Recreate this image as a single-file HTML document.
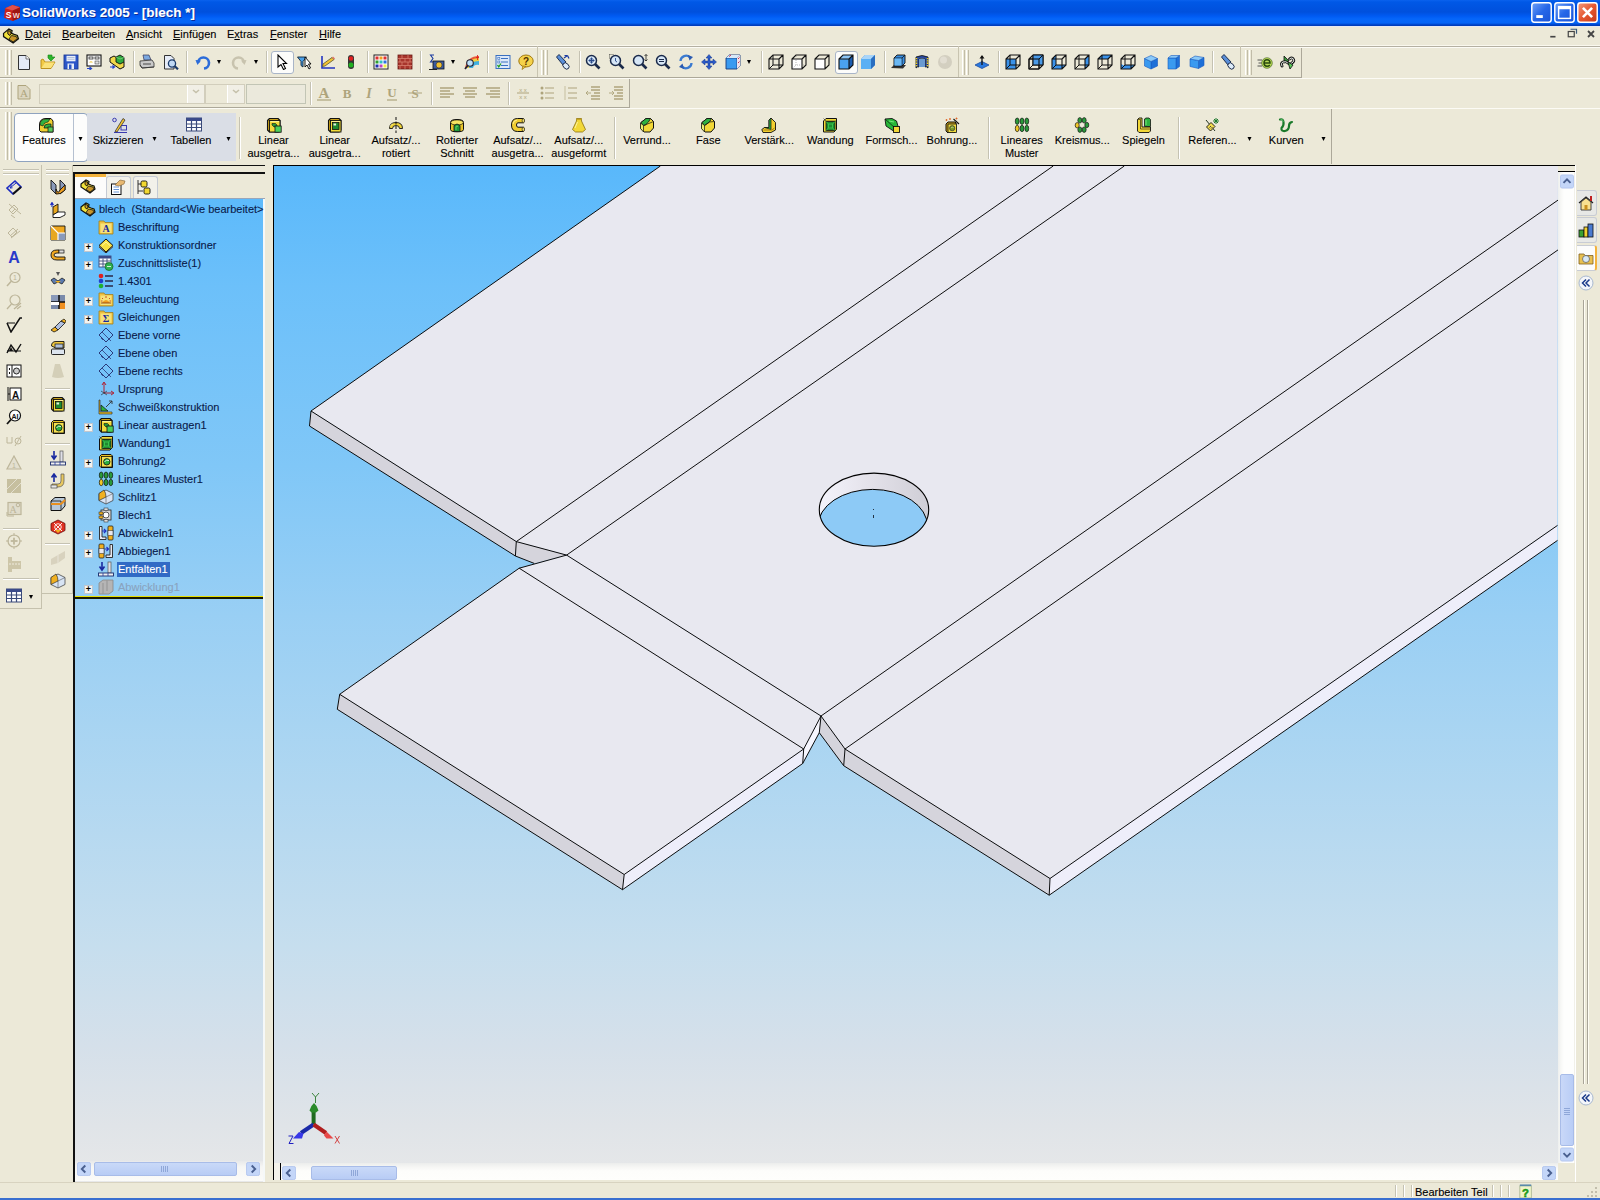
<!DOCTYPE html><html><head><meta charset="utf-8"><style>
*{margin:0;padding:0;box-sizing:border-box}
html,body{width:1600px;height:1200px;overflow:hidden;background:#ECE9D8;font-family:"Liberation Sans",sans-serif;font-size:11px;color:#000}
.a{position:absolute}
.tx{white-space:nowrap;line-height:13px;-webkit-text-stroke:0.1px currentColor}
.c{text-align:center}
#title{left:0;top:0;width:1600px;height:26px;background:linear-gradient(#0A62EE 0px,#0058E6 2px,#0053E0 8px,#0050DD 12px,#005AF2 16px,#0566FA 19px,#0564F6 23px,#0048D0 24.5px,#0038B0 26px)}
.mi{top:28px;font-size:11px;white-space:nowrap;line-height:13px;-webkit-text-stroke:0.1px currentColor}
.grip{width:3px;border-left:1px solid #fff;border-right:1px solid #C1BCA8}
.sep{width:2px;border-left:1px solid #C5C2B2;border-right:1px solid #fff}
.hsep{height:2px;border-top:1px solid #C5C2B2;border-bottom:1px solid #fff}
.tree{color:#0A1A4A}
</style></head><body>
<div id="title" class="a"></div>
<svg class="a" style="left:3px;top:4px" width="17" height="17" viewBox="0 0 16 16"><path d="M2 4 L9 1 L16 3 L16 13 L9 16 L1 13 Z" fill="#C8231E"/><path d="M9 1 L16 3 L16 13 L9 16 Z" fill="#9E1612"/><path d="M2 4L9 1L16 3L9 6Z" fill="#E0504A"/><text x="2.5" y="13" font-family="Liberation Sans" font-weight="bold" font-size="8" fill="#fff">S</text><text x="9.2" y="13" font-family="Liberation Sans" font-weight="bold" font-size="7" fill="#F4D0D0">W</text></svg>
<div class="a tx" style="left:22px;top:5px;color:#fff;font-weight:bold;font-size:13.5px;line-height:16px;text-shadow:1px 1px 0 #0B2C9A">SolidWorks 2005 - [blech *]</div>
<svg class="a" style="left:1531px;top:2px" width="21" height="21" viewBox="0 0 16 16"><defs><linearGradient id="xb" x1="0" y1="0" x2="1" y2="1"><stop offset="0" stop-color="#6FA1F8"/><stop offset="0.5" stop-color="#2767E8"/><stop offset="1" stop-color="#1A53D6"/></linearGradient></defs><rect x="0.6" y="0.6" width="14.8" height="14.8" rx="2" fill="url(#xb)" stroke="#fff" stroke-width="1.1"/><rect x="4" y="10" width="5" height="2.2" fill="#fff"/></svg>
<svg class="a" style="left:1554px;top:2px" width="21" height="21" viewBox="0 0 16 16"><defs><linearGradient id="xb" x1="0" y1="0" x2="1" y2="1"><stop offset="0" stop-color="#6FA1F8"/><stop offset="0.5" stop-color="#2767E8"/><stop offset="1" stop-color="#1A53D6"/></linearGradient></defs><rect x="0.6" y="0.6" width="14.8" height="14.8" rx="2" fill="url(#xb)" stroke="#fff" stroke-width="1.1"/><rect x="3.5" y="3.5" width="9" height="9" fill="none" stroke="#fff" stroke-width="1.1"/><rect x="3.5" y="3.5" width="9" height="2" fill="#fff"/></svg>
<svg class="a" style="left:1577px;top:2px" width="21" height="21" viewBox="0 0 16 16"><defs><linearGradient id="xr" x1="0" y1="0" x2="1" y2="1"><stop offset="0" stop-color="#F39B7E"/><stop offset="0.5" stop-color="#E5572F"/><stop offset="1" stop-color="#C4381A"/></linearGradient></defs><rect x="0.6" y="0.6" width="14.8" height="14.8" rx="2" fill="url(#xr)" stroke="#fff" stroke-width="1.1"/><path d="M4.5 4.5L11.5 11.5M11.5 4.5L4.5 11.5" stroke="#fff" stroke-width="2"/></svg>
<div class="a" style="left:0;top:26px;width:1600px;height:20px;background:#ECE9D8"></div>
<div class="a" style="left:0;top:26px;width:1600px;height:1px;background:#E6E8F2"></div>
<svg class="a" style="left:2px;top:27px" width="18" height="17" viewBox="0 0 16 16"><path d="M1 6 L6 2 L9 3.5 L8.5 6 L11 7 L14 8 L15 11 L10 15 L1 9 Z" fill="#F2E23A" stroke="#111" stroke-width="1.2"/><path d="M5 3.5 Q8 3 8 6 L7 8 L5 6.5Z" fill="#D4A020" stroke="#111" stroke-width="0.9"/><path d="M8.5 8 L13 9 L14 11 L10 14 L6 11.5Z" fill="#C9962A" stroke="#111" stroke-width="0.8"/></svg>
<div class="a mi" style="left:25px"><u>D</u>atei</div>
<div class="a mi" style="left:62px"><u>B</u>earbeiten</div>
<div class="a mi" style="left:126px"><u>A</u>nsicht</div>
<div class="a mi" style="left:173px"><u>E</u>infügen</div>
<div class="a mi" style="left:227px">E<u>x</u>tras</div>
<div class="a mi" style="left:270px"><u>F</u>enster</div>
<div class="a mi" style="left:319px"><u>H</u>ilfe</div>
<svg class="a" style="left:1548px;top:28px" width="12" height="12" viewBox="0 0 16 16"><rect x="3" y="10.5" width="7" height="2.2" fill="#444"/></svg>
<svg class="a" style="left:1566px;top:27px" width="12" height="12" viewBox="0 0 16 16"><path d="M6 3 H14 V9" fill="none" stroke="#3A5A7A" stroke-width="1.6"/><rect x="3" y="6" width="8" height="7" fill="none" stroke="#444" stroke-width="1.6"/></svg>
<svg class="a" style="left:1585px;top:28px" width="12" height="12" viewBox="0 0 16 16"><path d="M4 4L12 12M12 4L4 12" stroke="#444" stroke-width="2.4"/></svg>
<div class="a" style="left:0;top:45px;width:1600px;height:119px;background:#ECE9D8"></div><div class="a" style="left:0;top:45px;width:1600px;height:1px;background:#FAF8EE"></div><div class="a" style="left:0;top:46px;width:1600px;height:1px;background:#B4B0A2"></div><div class="a" style="left:0;top:47px;width:1600px;height:1px;background:#FCFBF5"></div>
<div class="a" style="left:0;top:48px;width:1302px;height:30px;border-bottom:1px solid #ACA899;border-right:1px solid #ACA899"></div><div class="a" style="left:0;top:78px;width:1600px;height:1px;background:#FCFBF5"></div>
<div class="a" style="left:0;top:79px;width:630px;height:29px;border-bottom:1px solid #ACA899;border-right:1px solid #ACA899"></div><div class="a" style="left:0;top:108px;width:1600px;height:1px;background:#FCFBF5"></div>
<div class="a" style="left:0;top:109px;width:1332px;height:55px;border-right:1px solid #ACA899"></div>
<div class="a grip" style="left:5px;top:50px;height:25px"></div>
<div class="a grip" style="left:9px;top:50px;height:25px"></div>
<div class="a grip" style="left:541px;top:50px;height:25px"></div>
<div class="a grip" style="left:545px;top:50px;height:25px"></div>
<div class="a grip" style="left:962px;top:50px;height:25px"></div>
<div class="a grip" style="left:966px;top:50px;height:25px"></div>
<div class="a grip" style="left:1245px;top:50px;height:25px"></div>
<div class="a grip" style="left:1249px;top:50px;height:25px"></div>
<div class="a grip" style="left:5px;top:82px;height:23px"></div>
<div class="a grip" style="left:9px;top:82px;height:23px"></div>
<div class="a grip" style="left:5px;top:112px;height:48px"></div>
<div class="a grip" style="left:9px;top:112px;height:48px"></div>
<div class="a sep" style="left:133px;top:51px;height:22px"></div>
<div class="a sep" style="left:186px;top:51px;height:22px"></div>
<div class="a sep" style="left:266px;top:51px;height:22px"></div>
<div class="a sep" style="left:367px;top:51px;height:22px"></div>
<div class="a sep" style="left:420px;top:51px;height:22px"></div>
<div class="a sep" style="left:487px;top:51px;height:22px"></div>
<div class="a sep" style="left:579px;top:51px;height:22px"></div>
<div class="a sep" style="left:761px;top:51px;height:22px"></div>
<div class="a sep" style="left:884px;top:51px;height:22px"></div>
<div class="a sep" style="left:998px;top:51px;height:22px"></div>
<div class="a sep" style="left:1212px;top:51px;height:22px"></div>
<div class="a" style="left:537px;top:46px;width:1px;height:31px;background:#C8C4B0"></div>
<div class="a" style="left:958px;top:46px;width:1px;height:31px;background:#C8C4B0"></div>
<div class="a" style="left:1240px;top:46px;width:1px;height:31px;background:#C8C4B0"></div>
<div class="a" style="left:271px;top:51px;width:23px;height:23px;background:#FCFCFA;border:1px solid #A9B5C8;border-radius:3px"></div>
<div class="a" style="left:835px;top:51px;width:23px;height:23px;background:#FCFCFA;border:1px solid #A9B5C8;border-radius:3px"></div>
<svg class="a" style="left:16px;top:54px" width="16" height="16" viewBox="0 0 16 16"><path d="M2.5 1.5 H10 L13.5 5 V15.5 H2.5 Z" fill="#E4EAF6" stroke="#333" stroke-width="1"/><path d="M10 1.5 V5 H13.5" fill="#fff" stroke="#555" stroke-width="0.8"/></svg>
<svg class="a" style="left:40px;top:54px" width="16" height="16" viewBox="0 0 16 16"><path d="M1 6 L1 14.5 L11 14.5 L15 8 L5 8 L3 5 Z" fill="#F3CB47" stroke="#B88A12" stroke-width="0.9"/><path d="M1.5 14 L5 8.5 L14.5 8.5 L11 14Z" fill="#FBE27A"/><path d="M8 1 L12 1 L12 3 L15 3 L11 7 L8 4 Z" fill="#2BB62B" stroke="#158015" stroke-width="0.6"/></svg>
<svg class="a" style="left:63px;top:54px" width="16" height="16" viewBox="0 0 16 16"><rect x="1" y="1" width="14" height="14" fill="#2B55C8" stroke="#1B3A96" stroke-width="0.9"/><rect x="3.5" y="1.8" width="9" height="5.5" fill="#E8EEF8"/><path d="M4.5 3.5H11.5M4.5 5.3H11.5" stroke="#9AAAD0" stroke-width="0.7"/><rect x="4.5" y="9.5" width="6.5" height="5.5" fill="#E8EEF8"/><rect x="6" y="10.5" width="2.5" height="4.5" fill="#2B55C8"/></svg>
<svg class="a" style="left:86px;top:54px" width="16" height="16" viewBox="0 0 16 16"><rect x="1" y="1" width="14" height="11" fill="#fff" stroke="#111" stroke-width="1.1"/><rect x="3" y="3" width="4" height="2" fill="none" stroke="#111" stroke-width="0.7"/><rect x="9" y="3" width="4" height="2" fill="none" stroke="#111" stroke-width="0.7"/><path d="M3 8.5 Q5 6 7 8.5Z" fill="#F0C840"/><rect x="9" y="7" width="4" height="3" fill="#ddd" stroke="#333" stroke-width="0.5"/><path d="M1 14.5 H5 M3.5 13 L5.5 14.5 L3.5 16" stroke="#2244CC" stroke-width="1.2" fill="none"/></svg>
<svg class="a" style="left:109px;top:54px" width="16" height="16" viewBox="0 0 16 16"><path d="M1 4 L5 2 L15 8 L15 13 L11 15 L1 8 Z" fill="#F0D84A" stroke="#111" stroke-width="1"/><path d="M7 3 L11 1 L15 3.5 L15 8 L11 10 L7 8Z" fill="#2EAA3C" stroke="#111" stroke-width="0.9"/><path d="M7 3L11 5L15 3.5" fill="none" stroke="#7FD080" stroke-width="0.8"/><path d="M1 13 H5 M3.5 11.5 L5.5 13 L3.5 14.5" stroke="#2244CC" stroke-width="1.2" fill="none"/></svg>
<svg class="a" style="left:139px;top:54px" width="16" height="16" viewBox="0 0 16 16"><path d="M4 1 L10 1 L12 6 L5 6Z" fill="#7BA8E0" stroke="#335" stroke-width="0.7"/><path d="M1 7 L13 6 L15 9 L15 13 L3 14 L1 11Z" fill="#C9C9C9" stroke="#444" stroke-width="0.9"/><path d="M1 11 L3 14 L15 13" fill="none" stroke="#333" stroke-width="0.8"/><rect x="4" y="9" width="8" height="2" fill="#888"/></svg>
<svg class="a" style="left:163px;top:54px" width="16" height="16" viewBox="0 0 16 16"><path d="M1.5 1.5 H8 L11 4.5 V15 H1.5 Z" fill="#E6ECF8" stroke="#333" stroke-width="1"/><circle cx="9" cy="9.5" r="3.6" fill="#BFD8F4" stroke="#1A3A6A" stroke-width="1.3"/><path d="M11.5 12 L15 15.3" stroke="#1A3A6A" stroke-width="2.2"/></svg>
<svg class="a" style="left:195px;top:54px" width="16" height="16" viewBox="0 0 16 16"><path d="M3 9 A5.5 5.5 0 1 1 9 14.5" fill="none" stroke="#2C6CD9" stroke-width="2.6"/><path d="M0.5 6 L6 6.5 L2.5 11Z" fill="#2C6CD9"/></svg>
<svg class="a" style="left:231px;top:54px" width="16" height="16" viewBox="0 0 16 16"><path d="M13 9 A5.5 5.5 0 1 0 7 14.5" fill="none" stroke="#C8C3AE" stroke-width="2.6"/><path d="M15.5 6 L10 6.5 L13.5 11Z" fill="#C8C3AE"/></svg>
<svg class="a" style="left:274px;top:54px" width="16" height="16" viewBox="0 0 16 16"><path d="M4 1 L4 13 L7 10.5 L9.5 15.5 L11.5 14.5 L9 9.5 L12.5 9.5 Z" fill="#fff" stroke="#000" stroke-width="1.1"/></svg>
<svg class="a" style="left:297px;top:54px" width="16" height="16" viewBox="0 0 16 16"><path d="M0.5 3 H9.5 L6 7.5 V13 L4 11.5 V7.5Z" fill="#4AA0E8" stroke="#123" stroke-width="0.9"/><path d="M8 3 L8 13 L10 11 L12 15 L13.5 14 L11.5 10 L14 10Z" fill="#fff" stroke="#000" stroke-width="0.9"/></svg>
<svg class="a" style="left:320px;top:54px" width="16" height="16" viewBox="0 0 16 16"><path d="M2 2 V14 H15" fill="none" stroke="#2235C0" stroke-width="1.6"/><path d="M3 10 L12 3.5 L14 5.5 L5 12 L2.5 12.5Z" fill="#F2C230" stroke="#553" stroke-width="0.8"/><path d="M12 3.5L14 5.5L15 4.5L13 2.5Z" fill="#E07060"/></svg>
<svg class="a" style="left:343px;top:54px" width="16" height="16" viewBox="0 0 16 16"><rect x="5" y="1" width="6" height="14" rx="3" fill="#333"/><circle cx="8" cy="4.5" r="2.3" fill="#E02020"/><circle cx="8" cy="11" r="2.5" fill="#20B020"/></svg>
<svg class="a" style="left:373px;top:54px" width="16" height="16" viewBox="0 0 16 16"><rect x="1" y="1" width="14" height="14" fill="#fff" stroke="#222" stroke-width="1"/><rect x="2.5" y="2.5" width="3" height="3" fill="#E03030"/><rect x="6.5" y="2.5" width="3" height="3" fill="#F0A020"/><rect x="10.5" y="2.5" width="3" height="3" fill="#E03030"/><rect x="2.5" y="6.5" width="3" height="3" fill="#30A030"/><rect x="6.5" y="6.5" width="3" height="3" fill="#30C0C0"/><rect x="10.5" y="6.5" width="3" height="3" fill="#3070E0"/><rect x="2.5" y="10.5" width="3" height="3" fill="#2030B0"/><rect x="6.5" y="10.5" width="3" height="3" fill="#C040C0"/><rect x="10.5" y="10.5" width="3" height="3" fill="#F0F040"/></svg>
<svg class="a" style="left:397px;top:54px" width="16" height="16" viewBox="0 0 16 16"><rect x="1" y="1" width="14" height="14" fill="#A8342C" stroke="#6A1A14" stroke-width="0.8"/><path d="M1 4.5H15M1 8H15M1 11.5H15M5 1V4.5M11 1V4.5M3 4.5V8M8 4.5V8M13 4.5V8M5 8V11.5M11 8V11.5M3 11.5V15M8 11.5V15M13 11.5V15" stroke="#D88070" stroke-width="0.8"/></svg>
<svg class="a" style="left:429px;top:54px" width="16" height="16" viewBox="0 0 16 16"><path d="M5 1 H1.5 L4 4.5 L1.5 8 H5" fill="none" stroke="#1A3AA0" stroke-width="1.1"/><rect x="4" y="7" width="11" height="8" fill="#3A5AA0" stroke="#111" stroke-width="0.8"/><circle cx="10" cy="11" r="3" fill="#F0C030" stroke="#333" stroke-width="0.6"/><path d="M0 15.5H8" stroke="#222" stroke-width="1"/></svg>
<svg class="a" style="left:464px;top:54px" width="16" height="16" viewBox="0 0 16 16"><path d="M1 14 Q3 2 15 2 V6 Q6 6 5 14Z" fill="#E85C3A"/><path d="M3 14 Q4 4 15 4 V9 Q8 8 7 14Z" fill="#F0D040"/><path d="M5 14 Q6 7 15 7 V11 Q10 10 9 14Z" fill="#40B0E0"/><circle cx="6" cy="9" r="3.3" fill="#BDE0F8" stroke="#223" stroke-width="1.1"/><path d="M3.8 11.5L1 15" stroke="#223" stroke-width="1.8"/><path d="M13.5 1V6M12 3.5H15" stroke="#E02020" stroke-width="0.9"/></svg>
<svg class="a" style="left:495px;top:54px" width="16" height="16" viewBox="0 0 16 16"><rect x="1" y="1.5" width="14" height="13" fill="#DCE8F8" stroke="#3A70C0" stroke-width="1"/><path d="M6 4.5H13M6 8H13M6 11.5H13" stroke="#3A70C0" stroke-width="1"/><rect x="2.8" y="3.5" width="2" height="2" fill="none" stroke="#3A70C0" stroke-width="0.6"/><rect x="2.8" y="7" width="2" height="2" fill="none" stroke="#3A70C0" stroke-width="0.6"/><path d="M2.5 11 L3.8 12.8 L6 9.5" stroke="#20A020" stroke-width="1.3" fill="none"/></svg>
<svg class="a" style="left:518px;top:54px" width="16" height="16" viewBox="0 0 16 16"><ellipse cx="8" cy="7" rx="7.2" ry="6" fill="#F5D24A" stroke="#A07810" stroke-width="1"/><path d="M5 12 L4 15.5 L8 12.5Z" fill="#F5D24A" stroke="#A07810" stroke-width="0.8"/><text x="8" y="11" text-anchor="middle" font-family="Liberation Sans" font-weight="bold" font-size="10" fill="#503000">?</text></svg>
<svg class="a" style="left:555px;top:54px" width="16" height="16" viewBox="0 0 16 16"><path d="M1.5 3 L4 0.5 L11 8 L8 11Z" fill="#5A8ED8" stroke="#102040" stroke-width="0.9"/><ellipse cx="11" cy="12" rx="3.5" ry="2.6" transform="rotate(45 11 12)" fill="#DCEBFA" stroke="#102040" stroke-width="0.9"/><path d="M9 4 L12.5 1.5 M12.5 1.5 L14 4.5 M9.5 1.5 H12.5" stroke="#1A3AA0" stroke-width="1.2" fill="none"/></svg>
<svg class="a" style="left:585px;top:54px" width="16" height="16" viewBox="0 0 16 16"><circle cx="6.5" cy="6.5" r="5" fill="#D6E6F6" stroke="#1A2A4A" stroke-width="1.5"/><path d="M6.5 3.5V9.5M3.5 6.5H9.5" stroke="#2A4A8A" stroke-width="1"/><circle cx="6.5" cy="6.5" r="2" fill="none" stroke="#2A4A8A" stroke-width="0.8"/><path d="M10 10 L14.5 14.5" stroke="#1A2A4A" stroke-width="2.6"/></svg>
<svg class="a" style="left:609px;top:54px" width="16" height="16" viewBox="0 0 16 16"><circle cx="6.5" cy="6.5" r="5" fill="#D6E6F6" stroke="#1A2A4A" stroke-width="1.5"/><path d="M6.5 4V7L8 8" stroke="#2A4A8A" stroke-width="0.9" fill="none"/><path d="M10 10 L14.5 14.5" stroke="#1A2A4A" stroke-width="2.6"/><path d="M0.5 0.5H5M0.5 0.5V5" stroke="#333" stroke-dasharray="1 1" stroke-width="0.8"/></svg>
<svg class="a" style="left:632px;top:54px" width="16" height="16" viewBox="0 0 16 16"><circle cx="6.5" cy="6.5" r="5" fill="#D6E6F6" stroke="#1A2A4A" stroke-width="1.5"/><path d="M10 10 L14.5 14.5" stroke="#1A2A4A" stroke-width="2.6"/><path d="M14 0.5V7M12.5 2L14 0.5L15.5 2M12.5 5.5L14 7L15.5 5.5" stroke="#222" stroke-width="0.8" fill="none"/></svg>
<svg class="a" style="left:655px;top:54px" width="16" height="16" viewBox="0 0 16 16"><circle cx="6.5" cy="6.5" r="5" fill="#D6E6F6" stroke="#1A2A4A" stroke-width="1.5"/><path d="M4 5.5H9M4 7.5H9" stroke="#1A2A4A" stroke-width="1.1"/><path d="M10 10 L14.5 14.5" stroke="#1A2A4A" stroke-width="2.6"/></svg>
<svg class="a" style="left:678px;top:54px" width="16" height="16" viewBox="0 0 16 16"><path d="M2.5 7 A5.5 5.5 0 0 1 12 3.5" fill="none" stroke="#3A7AD0" stroke-width="2.3"/><path d="M13.5 9 A5.5 5.5 0 0 1 4 12.5" fill="none" stroke="#3A7AD0" stroke-width="2.3"/><path d="M10 1 L15 3 L11.5 6.5Z" fill="#2A5AB0"/><path d="M6 15 L1 13 L4.5 9.5Z" fill="#2A5AB0"/></svg>
<svg class="a" style="left:701px;top:54px" width="16" height="16" viewBox="0 0 16 16"><path d="M8 0.5 L11 4 H9 V7 H12 V5 L15.5 8 L12 11 V9 H9 V12 H11 L8 15.5 L5 12 H7 V9 H4 V11 L0.5 8 L4 5 V7 H7 V4 H5Z" fill="#2A5AC8" stroke="#1A3A8A" stroke-width="0.5"/></svg>
<svg class="a" style="left:725px;top:54px" width="16" height="16" viewBox="0 0 16 16"><path d="M1 4 L4 1 L15 1 L15 12 L12 15 L1 15Z" fill="#3A9AF0" stroke="#1A3A7A" stroke-width="0.9"/><path d="M1 4H12V15M12 4L15 1" stroke="#1A3A7A" stroke-width="0.8" fill="none"/><path d="M1 4L4 1H15L12 4Z" fill="#D8E8F8"/><path d="M12 4L15 1V12L12 15Z" fill="#F0E0E8"/><path d="M4 2.5L6 1M13 5L14.5 3.5M13 9L14.5 7.5" stroke="#C02040" stroke-width="0.9"/></svg>
<svg class="a" style="left:768px;top:54px" width="16" height="16" viewBox="0 0 16 16"><path d="M1 5 L5 1 H15 V11 L11 15 H1Z" fill="#ECE9D8" fill-opacity="0"/><path d="M1 5 L5 1 H15 V11 L11 15 H1Z M1 5H11V15 M11 5L15 1" fill="none" stroke="#111" stroke-width="1.1"/><path d="M5 1V11H15M5 11L1 15" fill="none" stroke="#111" stroke-width="1"/></svg>
<svg class="a" style="left:791px;top:54px" width="16" height="16" viewBox="0 0 16 16"><path d="M1 5 L5 1 H15 V11 L11 15 H1Z" fill="#ECE9D8" fill-opacity="0"/><rect x="1" y="5" width="10" height="10" fill="#fff"/><path d="M1 5 L5 1 H15 V11 L11 15 H1Z M1 5H11V15 M11 5L15 1" fill="none" stroke="#111" stroke-width="1.1"/><path d="M5 2V11H14M5 11L2 14" fill="none" stroke="#888" stroke-width="0.6" stroke-dasharray="1 1"/></svg>
<svg class="a" style="left:814px;top:54px" width="16" height="16" viewBox="0 0 16 16"><path d="M1 5 L5 1 H15 V11 L11 15 H1Z" fill="#ECE9D8" fill-opacity="0"/><rect x="1" y="5" width="10" height="10" fill="#fff"/><path d="M1 5 L5 1 H15 V11 L11 15 H1Z M1 5H11V15 M11 5L15 1" fill="none" stroke="#111" stroke-width="1.1"/></svg>
<svg class="a" style="left:838px;top:54px" width="16" height="16" viewBox="0 0 16 16"><path d="M1 5 L5 1 H15 V11 L11 15 H1Z" fill="#2E86E0"/><path d="M1 5L5 1H15L11 5Z" fill="#8CC4F4"/><path d="M11 5L15 1V11L11 15Z" fill="#1A5CB0"/><rect x="1" y="5" width="10" height="10" fill="#4AA2F0"/><path d="M1 5 L5 1 H15 V11 L11 15 H1Z M1 5H11V15 M11 5L15 1" fill="none" stroke="#111" stroke-width="1.1"/></svg>
<svg class="a" style="left:860px;top:54px" width="16" height="16" viewBox="0 0 16 16"><path d="M1 5 L5 1 H15 V11 L11 15 H1Z" fill="#3A8EE0"/><path d="M1 5L5 1H15L11 5Z" fill="#A8D4F8"/><path d="M11 5L15 1V11L11 15Z" fill="#2A6EC0"/><rect x="1" y="5" width="10" height="10" fill="#5AB0F4"/></svg>
<svg class="a" style="left:891px;top:54px" width="16" height="16" viewBox="0 0 16 16"><path d="M0 14 L3 11 H15 L12 14.5Z" fill="#333"/><path d="M3 4 L6 1 H14 V9 L11 12 H3Z" fill="#3A8EE0" stroke="#111" stroke-width="0.9"/><path d="M3 4H11V12M11 4L14 1" stroke="#111" stroke-width="0.8" fill="none"/><rect x="3.5" y="4.5" width="7" height="7" fill="#6AB8F4"/></svg>
<svg class="a" style="left:914px;top:54px" width="16" height="16" viewBox="0 0 16 16"><path d="M2 3 Q8 0 14 3 V14 Q12 12 11 13 V5 Q8 4 5 5 V13 Q4 12 2 14Z" fill="#2A4AA0" stroke="#111" stroke-width="0.8"/><path d="M2.5 4V13M13.5 4V13" stroke="#F0D020" stroke-width="1.6" stroke-dasharray="1.3 1"/><path d="M5 5 Q8 4 11 5 V13 H5Z" fill="#6A9AD0"/></svg>
<svg class="a" style="left:937px;top:54px" width="16" height="16" viewBox="0 0 16 16"><circle cx="8" cy="8" r="7" fill="#D3CFC0"/><circle cx="6.5" cy="6" r="3.5" fill="#E2DED2"/></svg>
<svg class="a" style="left:974px;top:54px" width="16" height="16" viewBox="0 0 16 16"><path d="M1 11 L8 7.5 L15 11 L8 14.5Z" fill="#2A7AE0" stroke="#1A4AA0" stroke-width="0.8"/><path d="M8 11V2" stroke="#111" stroke-width="1.3"/><path d="M5.5 4.5L8 1L10.5 4.5Z" fill="#111"/></svg>
<svg class="a" style="left:1005px;top:54px" width="16" height="16" viewBox="0 0 16 16"><path d="M1 5 L5 1 H15 V11 L11 15 H1Z" fill="#ECE9D8" fill-opacity="0"/><rect x="1" y="5" width="10" height="10" fill="#3A92EA"/><path d="M1 5 L5 1 H15 V11 L11 15 H1Z M1 5H11V15 M11 5L15 1" fill="none" stroke="#111" stroke-width="1.1"/><path d="M5 1V11H15M5 11L1 15" fill="none" stroke="#111" stroke-width="1"/></svg>
<svg class="a" style="left:1028px;top:54px" width="16" height="16" viewBox="0 0 16 16"><path d="M1 5 L5 1 H15 V11 L11 15 H1Z" fill="#ECE9D8" fill-opacity="0"/><path d="M1 5 L5 1 H15 V11 L11 15 H1Z M1 5H11V15 M11 5L15 1" fill="none" stroke="#111" stroke-width="1.1"/><path d="M5 1V11H15M5 11L1 15" fill="none" stroke="#111" stroke-width="1"/><path d="M5 1 H15 V11 H5Z" fill="#3A92EA" fill-opacity="0.9"/><path d="M1 5 L5 1 H15 V11 L11 15 H1Z M1 5H11V15 M11 5L15 1M5 1V11H15M5 11L1 15" fill="none" stroke="#111" stroke-width="1"/></svg>
<svg class="a" style="left:1051px;top:54px" width="16" height="16" viewBox="0 0 16 16"><path d="M1 5L5 1V11L1 15Z" fill="#3A92EA"/><path d="M1 15L5 11H15L11 15Z" fill="#3A92EA"/><path d="M1 5 L5 1 H15 V11 L11 15 H1Z" fill="#ECE9D8" fill-opacity="0"/><path d="M1 5 L5 1 H15 V11 L11 15 H1Z M1 5H11V15 M11 5L15 1" fill="none" stroke="#111" stroke-width="1.1"/><path d="M5 1V11H15M5 11L1 15" fill="none" stroke="#111" stroke-width="1"/></svg>
<svg class="a" style="left:1074px;top:54px" width="16" height="16" viewBox="0 0 16 16"><path d="M11 5L15 1V11L11 15Z" fill="#3A92EA"/><path d="M1 5 L5 1 H15 V11 L11 15 H1Z" fill="#ECE9D8" fill-opacity="0"/><path d="M1 5 L5 1 H15 V11 L11 15 H1Z M1 5H11V15 M11 5L15 1" fill="none" stroke="#111" stroke-width="1.1"/><path d="M5 1V11H15M5 11L1 15" fill="none" stroke="#111" stroke-width="1"/></svg>
<svg class="a" style="left:1097px;top:54px" width="16" height="16" viewBox="0 0 16 16"><path d="M1 5L5 1H15L11 5Z" fill="#3A92EA"/><path d="M1 5 L5 1 H15 V11 L11 15 H1Z" fill="#ECE9D8" fill-opacity="0"/><path d="M1 5 L5 1 H15 V11 L11 15 H1Z M1 5H11V15 M11 5L15 1" fill="none" stroke="#111" stroke-width="1.1"/><path d="M5 1V11H15M5 11L1 15" fill="none" stroke="#111" stroke-width="1"/></svg>
<svg class="a" style="left:1120px;top:54px" width="16" height="16" viewBox="0 0 16 16"><path d="M1 15L5 11H15L11 15Z" fill="#3A92EA"/><path d="M1 10V15H11" fill="#3A92EA"/><path d="M1 5 L5 1 H15 V11 L11 15 H1Z" fill="#ECE9D8" fill-opacity="0"/><path d="M1 5 L5 1 H15 V11 L11 15 H1Z M1 5H11V15 M11 5L15 1" fill="none" stroke="#111" stroke-width="1.1"/><path d="M5 1V11H15M5 11L1 15" fill="none" stroke="#111" stroke-width="1"/></svg>
<svg class="a" style="left:1143px;top:54px" width="16" height="16" viewBox="0 0 16 16"><path d="M8 7.5 L14.5 4.5 V12 L8 15Z" fill="#1E70D8" stroke="#1A5AC0" stroke-width="0.6"/><path d="M1.5 4.5 L8 7.5 V15 L1.5 12Z" fill="#3A9AF0" stroke="#1A5AC0" stroke-width="0.6"/><path d="M1.5 4.5 L8 1.5 L14.5 4.5 L8 7.5Z" fill="#8CCAF8" stroke="#1A5AC0" stroke-width="0.6"/></svg>
<svg class="a" style="left:1166px;top:54px" width="16" height="16" viewBox="0 0 16 16"><path d="M10 4 L13.5 1.5 V12.5 L10 15Z" fill="#1E70D8" stroke="#1A5AC0" stroke-width="0.6"/><path d="M2 4 H10 V15 H2Z" fill="#3A9AF0" stroke="#1A5AC0" stroke-width="0.6"/><path d="M2 4 L5 1.5 H13.5 L10 4Z" fill="#8CCAF8" stroke="#1A5AC0" stroke-width="0.6"/></svg>
<svg class="a" style="left:1189px;top:54px" width="16" height="16" viewBox="0 0 16 16"><path d="M9.5 6.5 L15 3.5 V11.5 L9.5 14.5Z" fill="#1E70D8" stroke="#1A5AC0" stroke-width="0.6"/><path d="M1 5 L9.5 6.5 V14.5 L1 12.5Z" fill="#3A9AF0" stroke="#1A5AC0" stroke-width="0.6"/><path d="M1 5 L6 2 L15 3.5 L9.5 6.5Z" fill="#8CCAF8" stroke="#1A5AC0" stroke-width="0.6"/></svg>
<svg class="a" style="left:1220px;top:54px" width="16" height="16" viewBox="0 0 16 16"><path d="M1.5 3 L4 0.5 L11 8 L8 11Z" fill="#5A8ED8" stroke="#102040" stroke-width="0.9"/><ellipse cx="11" cy="12" rx="3.5" ry="2.6" transform="rotate(45 11 12)" fill="#DCEBFA" stroke="#102040" stroke-width="0.9"/></svg>
<svg class="a" style="left:1257px;top:54px" width="16" height="16" viewBox="0 0 16 16"><path d="M0.5 6H5M1.5 9H5M0.5 12H5" stroke="#444" stroke-width="0.9"/><circle cx="10" cy="9" r="5.3" fill="#B8DA58" stroke="#3A5A18" stroke-width="0.6"/><path d="M7 9H13 Q13 5.8 10 5.8 Q7 5.8 7 9 Q7 12.2 10 12.2 Q12 12.2 12.8 11" fill="none" stroke="#2A4A10" stroke-width="1.5"/></svg>
<svg class="a" style="left:1280px;top:54px" width="16" height="16" viewBox="0 0 16 16"><path d="M4 2 L9 7 L4 9Z" fill="#3A9A3A" stroke="#111" stroke-width="0.8"/><path d="M2 12 Q0.5 9 3 8 Q6 7 8 9 Q10 11 12 9 Q15 7 13 4.5 Q11 3 9.5 5" fill="none" stroke="#111" stroke-width="2.8" stroke-linecap="round"/><path d="M2 12 Q0.5 9 3 8 Q6 7 8 9 Q10 11 12 9 Q15 7 13 4.5 Q11 3 9.5 5" fill="none" stroke="#EEF4EE" stroke-width="1" stroke-linecap="round"/><path d="M8 8 L13 11 L10 15Z" fill="#5ACA5A" stroke="#111" stroke-width="0.8"/></svg>
<svg class="a" style="left:216px;top:60px" width="6" height="4" viewBox="0 0 16 16"><path d="M0 0 H16 L8 16Z" fill="#000"/></svg>
<svg class="a" style="left:253px;top:60px" width="6" height="4" viewBox="0 0 16 16"><path d="M0 0 H16 L8 16Z" fill="#000"/></svg>
<svg class="a" style="left:450px;top:60px" width="6" height="4" viewBox="0 0 16 16"><path d="M0 0 H16 L8 16Z" fill="#000"/></svg>
<svg class="a" style="left:746px;top:60px" width="6" height="4" viewBox="0 0 16 16"><path d="M0 0 H16 L8 16Z" fill="#000"/></svg>
<svg class="a" style="left:16px;top:84px" width="16" height="16" viewBox="0 0 16 16"><path d="M2 1.5H10L14 5.5V15H2Z" fill="#DCD6C0" stroke="#AEA47C" stroke-width="1"/><text x="8" y="13" text-anchor="middle" font-family="Liberation Serif" font-size="11" fill="#AEA47C">A</text></svg>
<div class="a" style="left:39px;top:84px;width:166px;height:20px;border:1px solid #D2CEBC;background:#ECE9D8"></div>
<div class="a" style="left:187px;top:85px;width:17px;height:18px;background:#F1EFE6;border-left:1px solid #fff"></div>
<div class="a" style="left:205px;top:84px;width:40px;height:20px;border:1px solid #D2CEBC;background:#ECE9D8"></div>
<div class="a" style="left:227px;top:85px;width:17px;height:18px;background:#F1EFE6;border-left:1px solid #fff"></div>
<svg class="a" style="left:191px;top:89px" width="10" height="8" viewBox="0 0 16 16"><path d="M2 2 L8 7 L14 2" fill="none" stroke="#C5C0AA" stroke-width="3"/></svg>
<svg class="a" style="left:231px;top:89px" width="10" height="8" viewBox="0 0 16 16"><path d="M2 2 L8 7 L14 2" fill="none" stroke="#C5C0AA" stroke-width="3"/></svg>
<div class="a" style="left:246px;top:84px;width:60px;height:20px;border:1px solid #C2C5B5;background:#EBE9DC"></div>
<div class="a sep" style="left:310px;top:82px;height:23px"></div>
<div class="a sep" style="left:431px;top:82px;height:23px"></div>
<div class="a sep" style="left:508px;top:82px;height:23px"></div>
<svg class="a" style="left:316px;top:85px" width="16" height="16" viewBox="0 0 16 16"><text x="8" y="13" text-anchor="middle" font-family="Liberation Serif" font-weight="bold" font-size="15" fill="#AEA47C">A</text><path d="M1 15H15" stroke="#AEA47C" stroke-width="1.2"/></svg>
<svg class="a" style="left:339px;top:85px" width="16" height="16" viewBox="0 0 16 16"><text x="8" y="13" text-anchor="middle" font-family="Liberation Serif" font-weight="bold" font-size="13" fill="#AEA47C">B</text></svg>
<svg class="a" style="left:361px;top:85px" width="16" height="16" viewBox="0 0 16 16"><text x="8" y="13" text-anchor="middle" font-family="Liberation Serif" font-style="italic" font-weight="bold" font-size="14" fill="#AEA47C">I</text></svg>
<svg class="a" style="left:384px;top:85px" width="16" height="16" viewBox="0 0 16 16"><text x="8" y="12" text-anchor="middle" font-family="Liberation Serif" font-weight="bold" font-size="13" fill="#AEA47C">U</text><path d="M3 15H13" stroke="#AEA47C" stroke-width="1.2"/></svg>
<svg class="a" style="left:407px;top:85px" width="16" height="16" viewBox="0 0 16 16"><text x="8" y="13" text-anchor="middle" font-family="Liberation Serif" font-weight="bold" font-size="13" fill="#AEA47C">S</text><path d="M1 8H15" stroke="#AEA47C" stroke-width="1"/></svg>
<svg class="a" style="left:439px;top:85px" width="16" height="16" viewBox="0 0 16 16"><path d="M1 3H15M1 6H11M1 9H15M1 12H11" stroke="#AEA47C" stroke-width="1.3"/></svg>
<svg class="a" style="left:462px;top:85px" width="16" height="16" viewBox="0 0 16 16"><path d="M1 3H15M3 6H13M1 9H15M3 12H13" stroke="#AEA47C" stroke-width="1.3"/></svg>
<svg class="a" style="left:485px;top:85px" width="16" height="16" viewBox="0 0 16 16"><path d="M1 3H15M5 6H15M1 9H15M5 12H15" stroke="#AEA47C" stroke-width="1.3"/></svg>
<svg class="a" style="left:515px;top:85px" width="16" height="16" viewBox="0 0 16 16"><path d="M2 8H14" stroke="#AEA47C" stroke-width="1"/><text x="8" y="6.5" text-anchor="middle" font-family="Liberation Sans" font-size="6" fill="#AEA47C">x x</text><text x="8" y="14" text-anchor="middle" font-family="Liberation Sans" font-size="6" fill="#AEA47C">x x</text></svg>
<svg class="a" style="left:539px;top:85px" width="16" height="16" viewBox="0 0 16 16"><circle cx="3" cy="3" r="1.5" fill="#AEA47C"/><circle cx="3" cy="8" r="1.5" fill="#AEA47C"/><circle cx="3" cy="13" r="1.5" fill="#AEA47C"/><path d="M6 3H15M6 8H15M6 13H15" stroke="#AEA47C" stroke-width="1.2"/></svg>
<svg class="a" style="left:562px;top:85px" width="16" height="16" viewBox="0 0 16 16"><path d="M3 1V15" stroke="#AEA47C" stroke-width="0.6"/><path d="M6 3H15M6 8H15M6 13H15" stroke="#AEA47C" stroke-width="1.2"/></svg>
<svg class="a" style="left:585px;top:85px" width="16" height="16" viewBox="0 0 16 16"><path d="M6 2H15M6 5H15M9 8H15M6 11H15M6 14H15" stroke="#AEA47C" stroke-width="1.4"/><path d="M1 8H6M3 6L1 8L3 10" stroke="#AEA47C" stroke-width="0.9" fill="none"/></svg>
<svg class="a" style="left:608px;top:85px" width="16" height="16" viewBox="0 0 16 16"><path d="M6 2H15M6 5H15M9 8H15M6 11H15M6 14H15" stroke="#AEA47C" stroke-width="1.4"/><path d="M1 8H6M4 6L6 8L4 10" stroke="#AEA47C" stroke-width="0.9" fill="none"/></svg>
<div class="a" style="left:14px;top:113px;width:74px;height:49px;background:#FDFDFC;border:1px solid #8FA3BF;border-radius:4px"></div>
<div class="a" style="left:73px;top:114px;width:1px;height:47px;background:#B5C0D0"></div>
<div class="a" style="left:87px;top:113px;width:149px;height:48px;background:#DADEE6"></div>
<svg class="a" style="left:38px;top:117px" width="16" height="16" viewBox="0 0 16 16"><path d="M1.5 8 Q1.5 1.5 8 1.5 H13 L15 4 V15 H3 L1.5 13.5Z" fill="#F0D030" stroke="#111" stroke-width="1"/><path d="M2 8 Q2 2 8 2 H12 L10 5 Q6 5 5 9 Z" fill="#2EB040" stroke="#111" stroke-width="0.6"/><path d="M6 11 Q6 7 10 7 L13 7 L13 11Z" fill="#2EB040" stroke="#111" stroke-width="0.7"/><rect x="10" y="10" width="5" height="5" fill="#5ACA5A" stroke="#111" stroke-width="0.7"/></svg>
<div class="a tx c" style="left:-16px;top:134px;width:120px;">Features</div>
<svg class="a" style="left:77px;top:137px" width="7" height="4" viewBox="0 0 16 16"><path d="M0 0 H16 L8 16Z" fill="#000"/></svg>
<svg class="a" style="left:112px;top:117px" width="16" height="16" viewBox="0 0 16 16"><circle cx="2.5" cy="3" r="1.8" fill="none" stroke="#3A3AB0" stroke-width="1"/><rect x="9" y="8.5" width="5.5" height="4.5" fill="none" stroke="#3A3AB0" stroke-width="1"/><path d="M2 15.5H15" stroke="#3A3AB0" stroke-width="1"/><path d="M3 14.5 L11 1.5 L13 3 L5 15Z" fill="#F2C230" stroke="#333" stroke-width="0.8"/></svg>
<div class="a tx c" style="left:58px;top:134px;width:120px;">Skizzieren</div>
<svg class="a" style="left:151px;top:137px" width="7" height="4" viewBox="0 0 16 16"><path d="M0 0 H16 L8 16Z" fill="#000"/></svg>
<svg class="a" style="left:186px;top:117px" width="16" height="16" viewBox="0 0 16 16"><rect x="0.5" y="1" width="15" height="13" fill="#fff" stroke="#3A4A7A" stroke-width="1"/><rect x="0.5" y="1" width="15" height="3" fill="#3A4A8A"/><path d="M0.5 7H15.5M0.5 10.5H15.5M5.5 4V14M10.5 4V14" stroke="#3A4A7A" stroke-width="1.2"/></svg>
<div class="a tx c" style="left:131px;top:134px;width:120px;">Tabellen</div>
<svg class="a" style="left:225px;top:137px" width="7" height="4" viewBox="0 0 16 16"><path d="M0 0 H16 L8 16Z" fill="#000"/></svg>
<div class="a sep" style="left:239px;top:117px;height:42px"></div>
<div class="a sep" style="left:614px;top:117px;height:42px"></div>
<div class="a sep" style="left:988px;top:117px;height:42px"></div>
<div class="a sep" style="left:1178px;top:117px;height:42px"></div>
<svg class="a" style="left:266px;top:117px" width="16" height="16" viewBox="0 0 16 16"><path d="M1.5 3.5 L3.5 1.5 H12 L14 3.5 V13 L12 15 H3.5 L1.5 13Z" fill="#C8A018" stroke="#111" stroke-width="1.1" stroke-linejoin="round"/><rect x="3.5" y="3.5" width="10.5" height="11.5" fill="#F2DC3A" stroke="#111" stroke-width="0.9"/><path d="M4.5 4.5 H13" stroke="#FFF7A8" stroke-width="0.8"/><path d="M6 6.5 L9.5 6.5 L11 8 V10 H8 L6 8Z" fill="#2A9A38" stroke="#111" stroke-width="0.6"/><rect x="9" y="9" width="6.2" height="6.2" fill="#4CD05A" stroke="#111" stroke-width="0.8"/></svg>
<div class="a tx c" style="left:213.5px;top:134px;width:120px;">Linear</div>
<div class="a tx c" style="left:213.5px;top:147px;width:120px;">ausgetra...</div>
<svg class="a" style="left:327px;top:117px" width="16" height="16" viewBox="0 0 16 16"><path d="M1.5 3.5 L3.5 1.5 H12 L14 3.5 V13 L12 15 H3.5 L1.5 13Z" fill="#C8A018" stroke="#111" stroke-width="1.1" stroke-linejoin="round"/><rect x="3.5" y="3.5" width="10.5" height="11.5" fill="#F2DC3A" stroke="#111" stroke-width="0.9"/><path d="M4.5 4.5 H13" stroke="#FFF7A8" stroke-width="0.8"/><rect x="5.5" y="5.5" width="6.5" height="7" fill="#1E8A30" stroke="#111" stroke-width="0.8"/><rect x="6.5" y="6.5" width="2.6" height="2" fill="#E8F0E0"/></svg>
<div class="a tx c" style="left:274.75px;top:134px;width:120px;">Linear</div>
<div class="a tx c" style="left:274.75px;top:147px;width:120px;">ausgetra...</div>
<svg class="a" style="left:388px;top:117px" width="16" height="16" viewBox="0 0 16 16"><path d="M1.5 11.5 Q1.5 5.5 8 5.5 Q14.5 5.5 14.5 11.5 L11.5 11.5 Q11.5 8.5 8 8.5 Q4.5 8.5 4.5 11.5Z" fill="#F0D438" stroke="#111" stroke-width="0.9"/><path d="M2 10 Q3 7 5 7" stroke="#FFF3A0" stroke-width="0.7" fill="none"/><path d="M8 0 V3 M8 4.5 V7.5 M8 9 V12 M8 13.5 V16" stroke="#111" stroke-width="1"/></svg>
<div class="a tx c" style="left:336px;top:134px;width:120px;">Aufsatz/...</div>
<div class="a tx c" style="left:336px;top:147px;width:120px;">rotiert</div>
<svg class="a" style="left:449px;top:117px" width="16" height="16" viewBox="0 0 16 16"><path d="M1.5 5.5 Q1.5 2.5 8 2.5 Q14.5 2.5 14.5 5.5 V12.5 Q14.5 14.8 8 14.8 Q1.5 14.8 1.5 12.5Z" fill="#E8C428" stroke="#111" stroke-width="1"/><ellipse cx="8" cy="5.5" rx="6.3" ry="2.6" fill="#F6E460" stroke="#111" stroke-width="0.7"/><path d="M5 14.5 V8.5 Q8 5.5 11 8.5 V14.5Z" fill="#1E9A3A" stroke="#111" stroke-width="0.8"/><path d="M7 13 V9.5 Q8 8.5 9 9.5" stroke="#7AE07A" stroke-width="0.8" fill="none"/></svg>
<div class="a tx c" style="left:397px;top:134px;width:120px;">Rotierter</div>
<div class="a tx c" style="left:397px;top:147px;width:120px;">Schnitt</div>
<svg class="a" style="left:510px;top:117px" width="16" height="16" viewBox="0 0 16 16"><path d="M13.5 1.5 H7.5 Q1.5 1.5 1.5 8 Q1.5 14.5 7.5 14.5 H13.5 Q15 12.3 13.5 10.2 H8 Q6.5 10.2 6.5 8 Q6.5 5.8 8 5.8 H13.5 Q15 3.6 13.5 1.5Z" fill="#F0CC30" stroke="#111" stroke-width="1"/><ellipse cx="13.3" cy="3.7" rx="1.2" ry="2.1" fill="#F8E470" stroke="#111" stroke-width="0.6"/><ellipse cx="13.3" cy="12.3" rx="1.2" ry="2.1" fill="#F8E470" stroke="#111" stroke-width="0.6"/><path d="M3 7 Q3.5 3.5 7 3" stroke="#FFF3A0" stroke-width="0.9" fill="none"/></svg>
<div class="a tx c" style="left:457.6px;top:134px;width:120px;">Aufsatz/...</div>
<div class="a tx c" style="left:457.6px;top:147px;width:120px;">ausgetra...</div>
<svg class="a" style="left:571px;top:117px" width="16" height="16" viewBox="0 0 16 16"><path d="M5.5 1.5 H10.5 V4 L14.5 12.5 L11.5 15 H4.5 L1.5 12.5 L5.5 4Z" fill="#F2D838" stroke="#8A7010" stroke-width="0.8"/><path d="M5.5 2.5 H10.5" stroke="#C8A820" stroke-width="1.2"/><path d="M4 11 L6.5 5" stroke="#FFF6A8" stroke-width="0.9"/></svg>
<div class="a tx c" style="left:518.8px;top:134px;width:120px;">Aufsatz/...</div>
<div class="a tx c" style="left:518.8px;top:147px;width:120px;">ausgeformt</div>
<svg class="a" style="left:639px;top:117px" width="16" height="16" viewBox="0 0 16 16"><path d="M2 5.5 L7 1.5 L11.5 1.5 L14.5 4.5 V11 L11 15 H5 L1.5 11.5Z" fill="#F2D838" stroke="#111" stroke-width="1"/><path d="M2 5.5 L7 1.5 L11.5 1.5 L9.5 5 Q6 9 4.5 8.5Z" fill="#2EB040" stroke="#111" stroke-width="0.8"/><path d="M1.5 11.5 V6 L4.5 8.5 V15Z" fill="#E8F070" stroke="#111" stroke-width="0.7"/><path d="M4.5 8.5 L11 6 L14.5 4.5" fill="none" stroke="#111" stroke-width="0.7"/></svg>
<div class="a tx c" style="left:587px;top:134px;width:120px;">Verrund...</div>
<svg class="a" style="left:700px;top:117px" width="16" height="16" viewBox="0 0 16 16"><path d="M2 5.5 L7 1.5 L11.5 1.5 L14.5 4.5 V11 L11 15 H5 L1.5 11.5Z" fill="#F2D838" stroke="#111" stroke-width="1"/><path d="M2 5.5 L7 1.5 L11.5 1.5 L9.5 5 L4.5 8.5Z" fill="#2EB040" stroke="#111" stroke-width="0.8"/><path d="M1.5 11.5 V6 L4.5 8.5 V15Z" fill="#E8F070" stroke="#111" stroke-width="0.7"/><path d="M4.5 8.5 L9.5 5 L14.5 4.5" fill="none" stroke="#111" stroke-width="0.7"/></svg>
<div class="a tx c" style="left:648.3px;top:134px;width:120px;">Fase</div>
<svg class="a" style="left:761px;top:117px" width="16" height="16" viewBox="0 0 16 16"><path d="M10 1 L14.5 5.5 V13 L10 15.5 H2 L0.8 12.5 L3.5 10.5 H8 V3Z" fill="#F2D030" stroke="#111" stroke-width="0.9"/><path d="M3.5 10.5 L8 10.5 V3 L10 1 V12.5 Z" fill="#2EB040" stroke="#111" stroke-width="0.7"/><path d="M2.5 13 H11 L13.5 11" fill="none" stroke="#8A6A10" stroke-width="0.8"/></svg>
<div class="a tx c" style="left:709.2px;top:134px;width:120px;">Verstärk...</div>
<svg class="a" style="left:822px;top:117px" width="16" height="16" viewBox="0 0 16 16"><path d="M1.5 4 L4 1.5 H14.5 V12.5 L12 15 H1.5Z" fill="#F2D838" stroke="#111" stroke-width="1"/><path d="M4 4 H14.5 M4 4 L1.5 1.5" stroke="#111" stroke-width="0.5"/><rect x="4" y="4.5" width="9" height="9" fill="#1E8A30" stroke="#111" stroke-width="0.8"/><path d="M4 4.5 L6.5 7 H10.5 L13 4.5 M6.5 7 V11 L4 13.5 M10.5 7 V11 L13 13.5 M6.5 11 H10.5" fill="none" stroke="#3ACA50" stroke-width="0.9"/></svg>
<div class="a tx c" style="left:770.3px;top:134px;width:120px;">Wandung</div>
<svg class="a" style="left:884px;top:117px" width="16" height="16" viewBox="0 0 16 16"><path d="M1 2 L8 1.5 L12.5 4 L14.5 11 L11 15 L2 9Z" fill="#28B838" stroke="#111" stroke-width="0.9"/><path d="M1 2 L11 11" stroke="#111" stroke-width="0.7"/><path d="M5 4 L10 5" stroke="#8AF08A" stroke-width="0.8"/><rect x="9.5" y="9.5" width="6" height="6" fill="#F2D838" stroke="#111" stroke-width="0.9"/></svg>
<div class="a tx c" style="left:831.5px;top:134px;width:120px;">Formsch...</div>
<svg class="a" style="left:944px;top:117px" width="16" height="16" viewBox="0 0 16 16"><path d="M2 7 L4 5 H11 L12 6 V14 L10 16 H4 L2 14Z" fill="#C8A018" stroke="#111" stroke-width="1"/><rect x="4" y="7" width="8.5" height="8.5" fill="#F2DC3A" stroke="#111" stroke-width="0.8"/><circle cx="8.2" cy="11.2" r="2.6" fill="#7A9A28" stroke="#333" stroke-width="0.7"/><path d="M7 11 Q8 9.5 9.5 10.5" stroke="#D0E8A0" stroke-width="0.7" fill="none"/><path d="M9.5 2 L15 7" stroke="#111" stroke-width="1.1"/><path d="M2.5 2 V4 M1.5 3 H3.5 M6 1 V3 M5 2 H7 M12.5 0.5 V2.5 M11.5 1.5 H13.5" stroke="#E06020" stroke-width="0.8"/></svg>
<div class="a tx c" style="left:892px;top:134px;width:120px;">Bohrung...</div>
<svg class="a" style="left:1014px;top:117px" width="16" height="16" viewBox="0 0 16 16"><ellipse cx="3.2" cy="4.2" rx="1.9" ry="3.2" fill="#2A9A3A" stroke="#111" stroke-width="0.7"/><ellipse cx="3.2" cy="11.5" rx="1.9" ry="3.2" fill="#F0C828" stroke="#111" stroke-width="0.7"/><ellipse cx="8.0" cy="4.2" rx="1.9" ry="3.2" fill="#2A9A3A" stroke="#111" stroke-width="0.7"/><ellipse cx="8.0" cy="11.5" rx="1.9" ry="3.2" fill="#2A9A3A" stroke="#111" stroke-width="0.7"/><ellipse cx="12.8" cy="4.2" rx="1.9" ry="3.2" fill="#2A9A3A" stroke="#111" stroke-width="0.7"/><ellipse cx="12.8" cy="11.5" rx="1.9" ry="3.2" fill="#2A9A3A" stroke="#111" stroke-width="0.7"/></svg>
<div class="a tx c" style="left:961.7px;top:134px;width:120px;">Lineares</div>
<div class="a tx c" style="left:961.7px;top:147px;width:120px;">Muster</div>
<svg class="a" style="left:1074px;top:117px" width="16" height="16" viewBox="0 0 16 16"><ellipse cx="5.84" cy="3.32" rx="2" ry="2.7" fill="#2A9A3A" stroke="#111" stroke-width="0.7"/><ellipse cx="10.16" cy="3.32" rx="2" ry="2.7" fill="#2A9A3A" stroke="#111" stroke-width="0.7"/><ellipse cx="12.80" cy="8.00" rx="2" ry="2.7" fill="#2A9A3A" stroke="#111" stroke-width="0.7"/><ellipse cx="10.16" cy="12.68" rx="2" ry="2.7" fill="#2A9A3A" stroke="#111" stroke-width="0.7"/><ellipse cx="5.84" cy="12.68" rx="2" ry="2.7" fill="#2A9A3A" stroke="#111" stroke-width="0.7"/><ellipse cx="3.20" cy="8.26" rx="2" ry="2.7" fill="#F0C828" stroke="#111" stroke-width="0.7"/></svg>
<div class="a tx c" style="left:1022.3px;top:134px;width:120px;">Kreismus...</div>
<svg class="a" style="left:1136px;top:117px" width="16" height="16" viewBox="0 0 16 16"><path d="M1.5 2.5 L3 1 H6 V10 H14.5 V14 L13 15.5 H3 L1.5 14Z" fill="#F2D838" stroke="#111" stroke-width="0.9"/><path d="M1.5 2.5 H4.5 V12 H14.5" fill="none" stroke="#111" stroke-width="0.6"/><path d="M8.5 2 L10 1 H13 L14.5 2.5 V9.5 H8.5Z" fill="#2EB040" stroke="#111" stroke-width="0.8"/><path d="M10 3 V8" stroke="#8AF08A" stroke-width="0.8"/></svg>
<div class="a tx c" style="left:1083.5px;top:134px;width:120px;">Spiegeln</div>
<svg class="a" style="left:1204px;top:117px" width="16" height="16" viewBox="0 0 16 16"><path d="M2 3 L11 14" stroke="#223322" stroke-width="1"/><path d="M2.5 10 L7 5.5 L11 9.5 L6.5 14Z" fill="#F0DC50" stroke="#111" stroke-width="0.9"/><path d="M5.5 10.5 L7 9 M7 11.5 L8.5 10" stroke="#333" stroke-width="0.9"/><path d="M12 1 V7 M9 4 H15 M10 2 L14 6 M14 2 L10 6" stroke="#1E7A2E" stroke-width="1"/></svg>
<div class="a tx c" style="left:1152.5px;top:134px;width:120px;">Referen...</div>
<svg class="a" style="left:1278px;top:117px" width="16" height="16" viewBox="0 0 16 16"><path d="M2 2.5 Q5 1.5 5.5 5 Q6 9 3.5 11 Q3 14.5 7 14 Q11 13 11 9 Q11 5.5 14 5" fill="none" stroke="#1A7A2A" stroke-width="2.2" stroke-linecap="round"/><path d="M2.5 2.3 Q5 1.8 5.2 5" fill="none" stroke="#7AE08A" stroke-width="0.6"/></svg>
<div class="a tx c" style="left:1226.3px;top:134px;width:120px;">Kurven</div>
<svg class="a" style="left:1246px;top:137px" width="7" height="4" viewBox="0 0 16 16"><path d="M0 0 H16 L8 16Z" fill="#000"/></svg>
<svg class="a" style="left:1320px;top:137px" width="7" height="4" viewBox="0 0 16 16"><path d="M0 0 H16 L8 16Z" fill="#000"/></svg>
<div class="a" style="left:0;top:165px;width:42px;height:444px;border-right:1px solid #C5C1AD;border-bottom:1px solid #C5C1AD;background:#ECE9D8"></div>
<div class="a" style="left:42px;top:165px;width:31px;height:429px;border-right:1px solid #C5C1AD;border-bottom:1px solid #C5C1AD;background:#ECE9D8"></div>
<div class="a hsep" style="left:3px;top:169px;width:36px"></div><div class="a hsep" style="left:3px;top:173px;width:36px"></div>
<div class="a hsep" style="left:46px;top:169px;width:23px"></div><div class="a hsep" style="left:46px;top:173px;width:23px"></div>
<svg class="a" style="left:6px;top:179px" width="16" height="16" viewBox="0 0 16 16"><path d="M1 9 L9 2 L15 8 L7 15Z" fill="none" stroke="#1A2AC0" stroke-width="1.6"/><path d="M7 15 L15 8" stroke="#111" stroke-width="2"/><path d="M4 9 L10 4 M4 9 L5.5 6.5 M4 9 L6.5 8.8" stroke="#1A2AC0" stroke-width="1"/></svg>
<svg class="a" style="left:6px;top:202px" width="16" height="16" viewBox="0 0 16 16"><path d="M3 8 L8 3 L12 7 L7 12Z M6 10 L9 7" fill="none" stroke="#BDB69A" stroke-width="1"/><path d="M3 2 L15 12" stroke="#BDB69A" stroke-width="1"/><path d="M5 13 L9 16" stroke="#BDB69A"/></svg>
<svg class="a" style="left:6px;top:225px" width="16" height="16" viewBox="0 0 16 16"><path d="M2 8 L7 3 L11 7 L6 12Z M4 11 L12 4 M5 13 L14 6" fill="none" stroke="#BDB69A" stroke-width="1"/></svg>
<svg class="a" style="left:6px;top:248px" width="16" height="16" viewBox="0 0 16 16"><text x="8" y="14.5" text-anchor="middle" font-family="Liberation Sans" font-weight="bold" font-size="16" fill="#2A3ACA">A</text></svg>
<svg class="a" style="left:6px;top:271px" width="16" height="16" viewBox="0 0 16 16"><circle cx="9" cy="6.5" r="5" fill="none" stroke="#BDB69A" stroke-width="1.2"/><path d="M5.5 10 L1 15" stroke="#BDB69A" stroke-width="1.5"/><text x="9" y="9" text-anchor="middle" font-family="Liberation Sans" font-size="7" fill="#BDB69A">1</text></svg>
<svg class="a" style="left:6px;top:294px" width="16" height="16" viewBox="0 0 16 16"><circle cx="9" cy="6" r="5" fill="none" stroke="#BDB69A" stroke-width="1.2"/><path d="M5.5 10 L1 15 M8 15 L15 9 M11 15 L15 12" stroke="#BDB69A" stroke-width="1.3"/></svg>
<svg class="a" style="left:6px;top:317px" width="16" height="16" viewBox="0 0 16 16"><path d="M1 6 L5 15 L14 1 H16" fill="none" stroke="#111" stroke-width="1.5"/><path d="M1 6H9" stroke="#111" stroke-width="1"/></svg>
<svg class="a" style="left:6px;top:340px" width="16" height="16" viewBox="0 0 16 16"><path d="M1 13 L5 5 L10 12 L15 4" fill="none" stroke="#111" stroke-width="1.4"/><path d="M1 11 H15" stroke="#111" stroke-width="1"/><path d="M5 7L7 11H3Z" fill="#111"/></svg>
<svg class="a" style="left:6px;top:363px" width="16" height="16" viewBox="0 0 16 16"><rect x="1" y="2" width="14" height="12" fill="#fff" stroke="#111" stroke-width="1"/><path d="M6 2V14" stroke="#111" stroke-width="1"/><circle cx="10.5" cy="8" r="3" fill="#ccc" stroke="#111" stroke-width="0.9"/><path d="M3.5 5V7M3.5 9V11" stroke="#111" stroke-width="1"/></svg>
<svg class="a" style="left:6px;top:386px" width="16" height="16" viewBox="0 0 16 16"><path d="M2 1V15 M2 8H4" stroke="#111" stroke-width="1"/><rect x="4" y="2" width="11" height="12" fill="#fff" stroke="#111" stroke-width="1"/><text x="9.5" y="12.5" text-anchor="middle" font-family="Liberation Sans" font-weight="bold" font-size="10" fill="#111">A</text></svg>
<svg class="a" style="left:6px;top:409px" width="16" height="16" viewBox="0 0 16 16"><circle cx="9" cy="6.5" r="5.5" fill="#fff" stroke="#111" stroke-width="1.2"/><path d="M5 10.5 L1 15" stroke="#111" stroke-width="1.8"/><text x="9" y="9.5" text-anchor="middle" font-family="Liberation Sans" font-weight="bold" font-size="7" fill="#111">AI</text></svg>
<svg class="a" style="left:6px;top:432px" width="16" height="16" viewBox="0 0 16 16"><path d="M1 5V11H6V5 M9 14L15 4" fill="none" stroke="#BDB69A" stroke-width="1"/><circle cx="12" cy="9" r="3" fill="none" stroke="#BDB69A"/></svg>
<svg class="a" style="left:6px;top:455px" width="16" height="16" viewBox="0 0 16 16"><path d="M8 1 L15 14 H1Z" fill="#E3DFCF" stroke="#BDB69A" stroke-width="1.2"/><text x="8" y="12.5" text-anchor="middle" font-family="Liberation Sans" font-size="7" fill="#BDB69A">1</text></svg>
<svg class="a" style="left:6px;top:478px" width="16" height="16" viewBox="0 0 16 16"><rect x="1" y="1" width="14" height="14" fill="#C6BF9F"/><path d="M1 11L11 1M5 15L15 5" stroke="#E3DFCF" stroke-width="1"/></svg>
<svg class="a" style="left:6px;top:501px" width="16" height="16" viewBox="0 0 16 16"><rect x="2" y="1.5" width="13" height="12" fill="#E0DCCB" stroke="#BDB69A" stroke-width="1.2"/><text x="7" y="12" text-anchor="middle" font-family="Liberation Serif" font-size="10" fill="#BDB69A">A</text><circle cx="12" cy="4" r="1.8" fill="none" stroke="#BDB69A"/><path d="M1 15 H8 M1 11V15" stroke="#BDB69A" stroke-width="1"/></svg>
<div class="a hsep" style="left:3px;top:528px;width:36px"></div>
<svg class="a" style="left:6px;top:533px" width="16" height="16" viewBox="0 0 16 16"><circle cx="8" cy="8" r="6" fill="none" stroke="#BDB69A" stroke-width="1.2"/><path d="M8 0V16M0 8H16" stroke="#BDB69A" stroke-width="1" stroke-dasharray="3 1.5"/><path d="M8 5V11M5 8H11" stroke="#BDB69A" stroke-width="1.4"/></svg>
<svg class="a" style="left:6px;top:556px" width="16" height="16" viewBox="0 0 16 16"><rect x="2" y="1" width="4" height="15" fill="#CDC6A9"/><rect x="6" y="5" width="9" height="8" fill="#CDC6A9"/><path d="M0 8H16" stroke="#EFEBDD" stroke-width="1" stroke-dasharray="2 1"/></svg>
<div class="a hsep" style="left:3px;top:578px;width:36px"></div>
<svg class="a" style="left:6px;top:588px" width="16" height="16" viewBox="0 0 16 16"><rect x="0.5" y="1" width="15" height="13" fill="#fff" stroke="#3A4A7A" stroke-width="1"/><rect x="0.5" y="1" width="15" height="3" fill="#3A4A8A"/><path d="M0.5 7H15.5M0.5 10.5H15.5M5.5 4V14M10.5 4V14" stroke="#3A4A7A" stroke-width="1.2"/></svg>
<svg class="a" style="left:28px;top:595px" width="6" height="4" viewBox="0 0 16 16"><path d="M0 0 H16 L8 16Z" fill="#000"/></svg>
<svg class="a" style="left:50px;top:179px" width="16" height="16" viewBox="0 0 16 16"><path d="M1 1 L6 6 V15 L1 10Z" fill="#8A9ABA" stroke="#111" stroke-width="0.9"/><path d="M10 1 L15 6 V11 L10 15 Z" fill="#8A9ABA" stroke="#111" stroke-width="0.9"/><path d="M6 10 Q8 16 10 11 L15 6 V11 Q10 16 6 15Z" fill="#F0A020" stroke="#111" stroke-width="0.9"/></svg>
<svg class="a" style="left:50px;top:202px" width="16" height="16" viewBox="0 0 16 16"><path d="M2 5 V1 M0.5 3 L2 0.5 L3.5 3" stroke="#1A2AC0" stroke-width="1.1" fill="none"/><path d="M3 5 L8 2 V10 L3 13Z" fill="#E8A820" stroke="#111" stroke-width="0.9"/><path d="M3 13 L8 10 H15 V13 L10 15.5 H3Z" fill="#fff" stroke="#111" stroke-width="0.9"/></svg>
<svg class="a" style="left:50px;top:225px" width="16" height="16" viewBox="0 0 16 16"><path d="M1 1 H15 V15 H1Z" fill="#F0A820" stroke="#111" stroke-width="0.9"/><path d="M1 1 L8 8 V15 H1Z" fill="#E8A820"/><path d="M8 8 H15 V15 H8Z" fill="#8A9ABA"/><path d="M1 1 L8 8 V15 M8 8 H15" stroke="#fff" stroke-width="1.2" fill="none"/></svg>
<svg class="a" style="left:50px;top:248px" width="16" height="16" viewBox="0 0 16 16"><path d="M9 2 H3 Q1 2 1 6 Q1 10 3 10 H9 V14 H3 Q-2 14 -1 6 Q0 -1 3 -1" fill="none"/><path d="M7 2 Q1 2 1 7 Q1 12 7 12 H15 V9 H7 Q4 9 4 7 Q4 5 7 5 H9 V2Z" fill="#F0A820" stroke="#111" stroke-width="0.9"/><rect x="9" y="2" width="5" height="3" fill="#ddd" stroke="#111" stroke-width="0.7"/></svg>
<svg class="a" style="left:50px;top:271px" width="16" height="16" viewBox="0 0 16 16"><path d="M6 1 H10 L8 5Z" fill="#555"/><path d="M1 9 L4 7 L8 10 L12 7 L15 9 L12 13 L8 11 L4 13Z" fill="#5A7AB0" stroke="#222" stroke-width="0.8"/><path d="M5 10 L8 12 L11 10" fill="#F0B020"/></svg>
<svg class="a" style="left:50px;top:294px" width="16" height="16" viewBox="0 0 16 16"><rect x="1" y="1" width="14" height="14" fill="#7A8AAA"/><rect x="1" y="1" width="8" height="7" fill="#8A9ABA"/><rect x="9" y="8" width="6" height="7" fill="#F09020"/><path d="M9 1V15M1 8H15" stroke="#111" stroke-width="1.5"/><rect x="1" y="8" width="8" height="3" fill="#fff"/></svg>
<svg class="a" style="left:50px;top:317px" width="16" height="16" viewBox="0 0 16 16"><path d="M1 13 L5 10 L8 13 L4 15Z" fill="#F0B020" stroke="#111" stroke-width="0.8"/><path d="M5 10 L11 4 L15 6 L8 13Z" fill="#B0C0E0" stroke="#111" stroke-width="0.8"/><path d="M11 4 L14 2 L16 4 L15 6Z" fill="#F0B020" stroke="#111" stroke-width="0.7"/></svg>
<svg class="a" style="left:50px;top:340px" width="16" height="16" viewBox="0 0 16 16"><path d="M1.5 6 Q1.5 1.5 6 1.5 H14 V8 H6 Z" fill="#F0C840" stroke="#111" stroke-width="0.9"/><rect x="1.5" y="9" width="13" height="5.5" rx="1" fill="#DCE4EE" stroke="#111" stroke-width="0.9"/><rect x="5" y="4" width="8" height="4" fill="#B0C0D8" stroke="#111" stroke-width="0.7"/></svg>
<svg class="a" style="left:50px;top:363px" width="16" height="16" viewBox="0 0 16 16"><path d="M5 1 H10 L14 14 Q8 16 2 14Z" fill="#D4CFB8"/></svg>
<svg class="a" style="left:50px;top:386px" width="16" height="16" viewBox="0 0 16 16"></svg>
<div class="a hsep" style="left:45px;top:388px;width:25px"></div>
<svg class="a" style="left:50px;top:396px" width="16" height="16" viewBox="0 0 16 16"><path d="M1.5 3.5 L3.5 1.5 H12 L14 3.5 V13 L12 15 H3.5 L1.5 13Z" fill="#C8A018" stroke="#111" stroke-width="1.1" stroke-linejoin="round"/><rect x="3.5" y="3.5" width="10.5" height="11.5" fill="#F2DC3A" stroke="#111" stroke-width="0.9"/><path d="M4.5 4.5 H13" stroke="#FFF7A8" stroke-width="0.8"/><rect x="5.5" y="5.5" width="6.5" height="7" fill="#1E8A30" stroke="#111" stroke-width="0.8"/><rect x="6.5" y="6.5" width="2.6" height="2" fill="#E8F0E0"/></svg>
<svg class="a" style="left:50px;top:419px" width="16" height="16" viewBox="0 0 16 16"><path d="M1.5 3.5 L3.5 1.5 H13 L14.5 3 V14.5 H3 L1.5 13Z" fill="#E8C020" stroke="#111" stroke-width="1"/><rect x="3.5" y="3.5" width="10.5" height="10.5" fill="#F6E050" stroke="#111" stroke-width="0.8"/><circle cx="8.8" cy="8.8" r="3.2" fill="#2AB040" stroke="#111" stroke-width="0.8"/><path d="M6.5 9 Q8 6 11 7.5" fill="none" stroke="#E0F0E0" stroke-width="1"/></svg>
<div class="a hsep" style="left:45px;top:443px;width:25px"></div>
<svg class="a" style="left:50px;top:450px" width="16" height="16" viewBox="0 0 16 16"><path d="M4 1V8 M1.5 5.5L4 9L6.5 5.5" stroke="#1A2AA0" stroke-width="1.6" fill="none"/><rect x="10" y="1" width="3" height="11" fill="#E0E0E8" stroke="#555" stroke-width="0.7"/><rect x="0.5" y="12" width="15" height="3" fill="#F0F0F0" stroke="#1A2A6A" stroke-width="0.9"/><path d="M5 12V15M10 12V15" stroke="#2A3AA0" stroke-width="0.8"/></svg>
<svg class="a" style="left:50px;top:473px" width="16" height="16" viewBox="0 0 16 16"><path d="M4 9V2 M1.5 4.5L4 1L6.5 4.5" stroke="#1A2AA0" stroke-width="1.6" fill="none"/><path d="M11 1 H14 V8 Q14 14 8 14 H2 V11 H8 Q11 11 11 8Z" fill="#E8C860" stroke="#555" stroke-width="0.7"/><rect x="1" y="12" width="6" height="3" fill="#E8E8E8" stroke="#333" stroke-width="0.6"/></svg>
<svg class="a" style="left:50px;top:496px" width="16" height="16" viewBox="0 0 16 16"><path d="M1 5 L5 1.5 H15 V10 L11 14.5 H1Z" fill="#B8C8D8" stroke="#111" stroke-width="1"/><path d="M1 5H11V14.5" stroke="#111" stroke-width="0.8" fill="none"/><path d="M1 8 H11 M11 8L15 4" stroke="#E89020" stroke-width="2.2"/></svg>
<svg class="a" style="left:50px;top:519px" width="16" height="16" viewBox="0 0 16 16"><path d="M8 1 L15 4.5 V11.5 L8 15 L1 11.5 V4.5Z" fill="#E03020" stroke="#6A1010" stroke-width="0.8"/><path d="M4 4 L12 12 M12 4 L4 12" stroke="#fff" stroke-width="0.9"/><circle cx="8" cy="8" r="3.3" fill="none" stroke="#fff" stroke-width="0.9"/><path d="M5 11 L8 14 L11 11Z" fill="#F0B020"/></svg>
<div class="a hsep" style="left:45px;top:543px;width:25px"></div>
<svg class="a" style="left:50px;top:550px" width="16" height="16" viewBox="0 0 16 16"><path d="M1 9 L8 5 L15 1 V8 L8 13 L1 15Z" fill="#D8D2BE"/><path d="M8 5V13" stroke="#E8E4D8"/></svg>
<svg class="a" style="left:50px;top:573px" width="16" height="16" viewBox="0 0 16 16"><path d="M8 1 L15 4.5 V11.5 L8 15 L1 11.5 V4.5Z" fill="#D8E4F4" stroke="#333" stroke-width="0.7"/><path d="M8 8 L15 4.5 M8 8V15 M8 8 L1 4.5" stroke="#555" stroke-width="0.6"/><path d="M1 4.5 L6 1 Q8 4 8 8 L1 11.5Z" fill="#F0B020" stroke="#333" stroke-width="0.7"/></svg>
<div class="a" style="left:73px;top:165px;width:1500px;height:1px;background:#111"></div>
<div class="a" style="left:73px;top:172px;width:2px;height:1010px;background:#111"></div>
<div class="a" style="left:73px;top:172px;width:193px;height:2px;background:#111"></div>
<div class="a" style="left:75px;top:174px;width:190px;height:25px;background:#ECE9D8"></div>
<div class="a" style="left:75px;top:174px;width:31px;height:25px;background:#FCFCFB;border-top:3px solid #F3B33D"></div>
<div class="a" style="left:106px;top:176px;width:25px;height:22px;background:#F2F1EA;border:1px solid #C4CAD4;border-bottom:none;border-radius:3px 3px 0 0"></div>
<div class="a" style="left:133px;top:176px;width:25px;height:22px;background:#F2F1EA;border:1px solid #C4CAD4;border-bottom:none;border-radius:3px 3px 0 0"></div>
<svg class="a" style="left:80px;top:178px" width="16" height="16" viewBox="0 0 16 16"><path d="M1 6 L6 2 L9 3.5 L8.5 6 L11 7 L14 8 L15 11 L10 15 L1 9 Z" fill="#F2E23A" stroke="#111" stroke-width="1.2"/><path d="M5 3.5 Q8 3 8 6 L7 8 L5 6.5Z" fill="#D4A020" stroke="#111" stroke-width="0.9"/><path d="M8.5 8 L13 9 L14 11 L10 14 L6 11.5Z" fill="#C9962A" stroke="#111" stroke-width="0.8"/></svg>
<svg class="a" style="left:110px;top:179px" width="16" height="16" viewBox="0 0 16 16"><rect x="1.5" y="5" width="9.5" height="10.5" fill="#fff" stroke="#111" stroke-width="1"/><path d="M3.5 8H9M3.5 10.5H9M3.5 13H9" stroke="#5A8AD0" stroke-width="0.9"/><path d="M5 6 L10 1 L15 2 L14 5 L9 7Z" fill="#E8B870" stroke="#806030" stroke-width="0.6"/></svg>
<svg class="a" style="left:136px;top:179px" width="16" height="16" viewBox="0 0 16 16"><path d="M2 1V15M2 5H6M2 12H7" stroke="#333" stroke-width="1"/><rect x="5" y="2" width="6" height="6" rx="1.5" fill="#F2D830" stroke="#111" stroke-width="0.9"/><rect x="8" y="9" width="6" height="6" rx="1.5" fill="#F2D830" stroke="#111" stroke-width="0.9"/></svg>
<div class="a" style="left:75px;top:198px;width:190px;height:1px;background:#9AA6BA"></div>
<div class="a" style="left:75px;top:199px;width:188px;height:983px;background:linear-gradient(#5DBAFB 0px,#6CC0FA 87px,#80C7F7 267px,#99CFF4 417px,#B0D7F1 587px,#C6DEEE 747px,#D5E0EA 847px,#E0E4E8 927px,#E7E8E9 981px)"></div>
<div class="a" style="left:263px;top:199px;width:2px;height:983px;background:#F5F8F8"></div>
<div class="a" style="left:265px;top:165px;width:8px;height:1017px;background:#ECE9D8"></div>
<svg class="a" style="left:80px;top:201px" width="16" height="16" viewBox="0 0 16 16"><path d="M1 6 L6 2 L9 3.5 L8.5 6 L11 7 L14 8 L15 11 L10 15 L1 9 Z" fill="#F2E23A" stroke="#111" stroke-width="1.2"/><path d="M5 3.5 Q8 3 8 6 L7 8 L5 6.5Z" fill="#D4A020" stroke="#111" stroke-width="0.9"/><path d="M8.5 8 L13 9 L14 11 L10 14 L6 11.5Z" fill="#C9962A" stroke="#111" stroke-width="0.8"/></svg>
<div class="a tx" style="left:99px;top:203px;color:#0A1A4A">blech&nbsp; (Standard&lt;Wie bearbeitet&gt;</div>
<svg class="a" style="left:98px;top:219px" width="16" height="16" viewBox="0 0 16 16"><path d="M1 2 H6 L7 3.5 H15 V15 H1Z" fill="#F0C040" stroke="#A08020" stroke-width="0.8"/><rect x="2.5" y="4.5" width="11" height="9.5" fill="#F6E27A"/><text x="8" y="13" text-anchor="middle" font-family="Liberation Serif" font-weight="bold" font-size="10" fill="#1A2A9A">A</text></svg>
<div class="a tx" style="left:118px;top:221px;color:#0A1A4A">Beschriftung</div>
<svg class="a" style="left:98px;top:237px" width="16" height="16" viewBox="0 0 16 16"><path d="M1 10 L8 16 L15 9.5" fill="none" stroke="#111" stroke-width="1"/><path d="M1 9 L8 15 L15 8.5 L15 9.5 L8 15.5 L1 10Z" fill="#C89A70"/><path d="M1 8.5 L8 2 L15 8.5 L8 15Z" fill="#F6E040" stroke="#111" stroke-width="1"/><path d="M4 8.5 L8 5 L12 8.5" fill="none" stroke="#FFF7A0" stroke-width="1"/></svg>
<div class="a tx" style="left:118px;top:239px;color:#0A1A4A">Konstruktionsordner</div>
<div class="a" style="left:84px;top:243px;width:9px;height:9px;background:#F4F4F0;border:1px solid #C0C6CE;font:bold 9px/7px 'Liberation Sans';text-align:center;color:#000">+</div>
<svg class="a" style="left:98px;top:255px" width="16" height="16" viewBox="0 0 16 16"><rect x="1" y="1" width="12" height="11" fill="#fff" stroke="#3A4A7A" stroke-width="0.9"/><rect x="1" y="1" width="12" height="2.5" fill="#3A4A8A"/><path d="M1 6H13M1 9H13M5 3.5V12M9 3.5V12" stroke="#3A4A7A" stroke-width="0.9"/><circle cx="11" cy="11.5" r="4" fill="#2EB050" stroke="#1A6A2A" stroke-width="0.8"/><path d="M9 11.5 H13" stroke="#fff" stroke-width="0.8"/></svg>
<div class="a tx" style="left:118px;top:257px;color:#0A1A4A">Zuschnittsliste(1)</div>
<div class="a" style="left:84px;top:261px;width:9px;height:9px;background:#F4F4F0;border:1px solid #C0C6CE;font:bold 9px/7px 'Liberation Sans';text-align:center;color:#000">+</div>
<svg class="a" style="left:98px;top:273px" width="16" height="16" viewBox="0 0 16 16"><circle cx="3" cy="3" r="2.3" fill="#E02020"/><circle cx="3" cy="8" r="2.3" fill="#2040D0"/><circle cx="3" cy="13" r="2.3" fill="#20B030"/><path d="M7 3H15M7 8H15M7 13H15" stroke="#2A2A4A" stroke-width="1.6"/></svg>
<div class="a tx" style="left:118px;top:275px;color:#0A1A4A">1.4301</div>
<svg class="a" style="left:98px;top:291px" width="16" height="16" viewBox="0 0 16 16"><path d="M1 2 H6 L7 3.5 H15 V15 H1Z" fill="#F0C040" stroke="#A08020" stroke-width="0.8"/><rect x="2.5" y="4.5" width="11" height="9.5" fill="#F6E27A"/><path d="M4 12 Q8 6 12 12Z" fill="#F0A020"/><path d="M8 5V7M4 7L5 8M12 7L11 8M3 10H4.5M11.5 10H13" stroke="#C03010" stroke-width="0.8"/><path d="M3 12H13" stroke="#803010" stroke-width="0.8"/></svg>
<div class="a tx" style="left:118px;top:293px;color:#0A1A4A">Beleuchtung</div>
<div class="a" style="left:84px;top:297px;width:9px;height:9px;background:#F4F4F0;border:1px solid #C0C6CE;font:bold 9px/7px 'Liberation Sans';text-align:center;color:#000">+</div>
<svg class="a" style="left:98px;top:309px" width="16" height="16" viewBox="0 0 16 16"><path d="M1 2 H6 L7 3.5 H15 V15 H1Z" fill="#F0C040" stroke="#A08020" stroke-width="0.8"/><rect x="2.5" y="4.5" width="11" height="9.5" fill="#F6E27A"/><text x="8" y="13" text-anchor="middle" font-family="Liberation Serif" font-weight="bold" font-size="10" fill="#1A2A9A">Σ</text></svg>
<div class="a tx" style="left:118px;top:311px;color:#0A1A4A">Gleichungen</div>
<div class="a" style="left:84px;top:315px;width:9px;height:9px;background:#F4F4F0;border:1px solid #C0C6CE;font:bold 9px/7px 'Liberation Sans';text-align:center;color:#000">+</div>
<svg class="a" style="left:98px;top:327px" width="16" height="16" viewBox="0 0 16 16"><path d="M1 8 L8 1 L15 8 L8 15Z" fill="none" stroke="#2A3A7A" stroke-width="1"/><path d="M4 5 L13 14 M3 11 L5 13" stroke="#2A3A7A" stroke-width="0.8"/></svg>
<div class="a tx" style="left:118px;top:329px;color:#0A1A4A">Ebene vorne</div>
<svg class="a" style="left:98px;top:345px" width="16" height="16" viewBox="0 0 16 16"><path d="M1 8 L8 1 L15 8 L8 15Z" fill="none" stroke="#2A3A7A" stroke-width="1"/><path d="M4 5 L13 14 M3 11 L5 13" stroke="#2A3A7A" stroke-width="0.8"/></svg>
<div class="a tx" style="left:118px;top:347px;color:#0A1A4A">Ebene oben</div>
<svg class="a" style="left:98px;top:363px" width="16" height="16" viewBox="0 0 16 16"><path d="M1 8 L8 1 L15 8 L8 15Z" fill="none" stroke="#2A3A7A" stroke-width="1"/><path d="M4 5 L13 14 M3 11 L5 13" stroke="#2A3A7A" stroke-width="0.8"/></svg>
<div class="a tx" style="left:118px;top:365px;color:#0A1A4A">Ebene rechts</div>
<svg class="a" style="left:98px;top:381px" width="16" height="16" viewBox="0 0 16 16"><path d="M6 2V12H15" fill="none" stroke="#B02030" stroke-width="1"/><path d="M4 4L6 1L8 4M13 10L16 12L13 14" fill="none" stroke="#B02030" stroke-width="1"/><path d="M3 10L9 14M3 14L9 10" stroke="#222" stroke-width="0.6"/></svg>
<div class="a tx" style="left:118px;top:383px;color:#0A1A4A">Ursprung</div>
<svg class="a" style="left:98px;top:399px" width="16" height="16" viewBox="0 0 16 16"><path d="M2 1V13H14V15H1V1Z" fill="#F0C020" stroke="#333" stroke-width="0.7"/><path d="M3 12 L3 6 L10 12Z" fill="#2EB040" stroke="#111" stroke-width="0.7"/><path d="M8 8 L14 2 M11 2H14V5" stroke="#333" stroke-width="0.9" fill="none"/></svg>
<div class="a tx" style="left:118px;top:401px;color:#0A1A4A">Schweißkonstruktion</div>
<svg class="a" style="left:98px;top:417px" width="16" height="16" viewBox="0 0 16 16"><path d="M1.5 3.5 L3.5 1.5 H12 L14 3.5 V13 L12 15 H3.5 L1.5 13Z" fill="#C8A018" stroke="#111" stroke-width="1.1" stroke-linejoin="round"/><rect x="3.5" y="3.5" width="10.5" height="11.5" fill="#F2DC3A" stroke="#111" stroke-width="0.9"/><path d="M4.5 4.5 H13" stroke="#FFF7A8" stroke-width="0.8"/><path d="M6 6.5 L9.5 6.5 L11 8 V10 H8 L6 8Z" fill="#2A9A38" stroke="#111" stroke-width="0.6"/><rect x="9" y="9" width="6.2" height="6.2" fill="#4CD05A" stroke="#111" stroke-width="0.8"/></svg>
<div class="a tx" style="left:118px;top:419px;color:#0A1A4A">Linear austragen1</div>
<div class="a" style="left:84px;top:423px;width:9px;height:9px;background:#F4F4F0;border:1px solid #C0C6CE;font:bold 9px/7px 'Liberation Sans';text-align:center;color:#000">+</div>
<svg class="a" style="left:98px;top:435px" width="16" height="16" viewBox="0 0 16 16"><path d="M1.5 4 L4 1.5 H14.5 V12.5 L12 15 H1.5Z" fill="#F2D838" stroke="#111" stroke-width="1"/><path d="M4 4 H14.5 M4 4 L1.5 1.5" stroke="#111" stroke-width="0.5"/><rect x="4" y="4.5" width="9" height="9" fill="#1E8A30" stroke="#111" stroke-width="0.8"/><path d="M4 4.5 L6.5 7 H10.5 L13 4.5 M6.5 7 V11 L4 13.5 M10.5 7 V11 L13 13.5 M6.5 11 H10.5" fill="none" stroke="#3ACA50" stroke-width="0.9"/></svg>
<div class="a tx" style="left:118px;top:437px;color:#0A1A4A">Wandung1</div>
<svg class="a" style="left:98px;top:453px" width="16" height="16" viewBox="0 0 16 16"><path d="M1.5 3.5 L3.5 1.5 H13 L14.5 3 V14.5 H3 L1.5 13Z" fill="#E8C020" stroke="#111" stroke-width="1"/><rect x="3.5" y="3.5" width="10.5" height="10.5" fill="#F6E050" stroke="#111" stroke-width="0.8"/><circle cx="8.8" cy="8.8" r="3.2" fill="#2AB040" stroke="#111" stroke-width="0.8"/><path d="M6.5 9 Q8 6 11 7.5" fill="none" stroke="#E0F0E0" stroke-width="1"/></svg>
<div class="a tx" style="left:118px;top:455px;color:#0A1A4A">Bohrung2</div>
<div class="a" style="left:84px;top:459px;width:9px;height:9px;background:#F4F4F0;border:1px solid #C0C6CE;font:bold 9px/7px 'Liberation Sans';text-align:center;color:#000">+</div>
<svg class="a" style="left:98px;top:471px" width="16" height="16" viewBox="0 0 16 16"><ellipse cx="3.2" cy="4.2" rx="1.9" ry="3.2" fill="#2A9A3A" stroke="#111" stroke-width="0.7"/><ellipse cx="3.2" cy="11.5" rx="1.9" ry="3.2" fill="#F0C828" stroke="#111" stroke-width="0.7"/><ellipse cx="8.0" cy="4.2" rx="1.9" ry="3.2" fill="#2A9A3A" stroke="#111" stroke-width="0.7"/><ellipse cx="8.0" cy="11.5" rx="1.9" ry="3.2" fill="#2A9A3A" stroke="#111" stroke-width="0.7"/><ellipse cx="12.8" cy="4.2" rx="1.9" ry="3.2" fill="#2A9A3A" stroke="#111" stroke-width="0.7"/><ellipse cx="12.8" cy="11.5" rx="1.9" ry="3.2" fill="#2A9A3A" stroke="#111" stroke-width="0.7"/></svg>
<div class="a tx" style="left:118px;top:473px;color:#0A1A4A">Lineares Muster1</div>
<svg class="a" style="left:98px;top:489px" width="16" height="16" viewBox="0 0 16 16"><path d="M8 1 L15 4.5 V11.5 L8 15 L1 11.5 V4.5Z" fill="#D8E4F4" stroke="#333" stroke-width="0.7"/><path d="M8 8 L15 4.5 M8 8V15 M8 8 L1 4.5" stroke="#555" stroke-width="0.6"/><path d="M1 4.5 L6 1 Q8 4 8 8 L1 11.5Z" fill="#F0B020" stroke="#333" stroke-width="0.7"/></svg>
<div class="a tx" style="left:118px;top:491px;color:#0A1A4A">Schlitz1</div>
<svg class="a" style="left:98px;top:507px" width="16" height="16" viewBox="0 0 16 16"><rect x="3" y="3" width="10" height="10" fill="#D8D8D8" stroke="#222" stroke-width="0.8"/><circle cx="8" cy="8" r="3" fill="#fff" stroke="#333" stroke-width="0.8"/><rect x="1" y="5" width="4" height="2.5" fill="#F0B020" stroke="#222" stroke-width="0.5"/><rect x="1" y="9" width="4" height="2.5" fill="#F0B020" stroke="#222" stroke-width="0.5"/><rect x="6" y="1" width="4" height="2.5" fill="#ddd" stroke="#222" stroke-width="0.5"/><rect x="6" y="12.5" width="4" height="2.5" fill="#ddd" stroke="#222" stroke-width="0.5"/></svg>
<div class="a tx" style="left:118px;top:509px;color:#0A1A4A">Blech1</div>
<svg class="a" style="left:98px;top:525px" width="16" height="16" viewBox="0 0 16 16"><path d="M1.5 1.5H4V12H8V14.5H1.5Z" fill="#E8E8F0" stroke="#222" stroke-width="0.9"/><path d="M4 6 H8 M6 4L8 6L6 8" stroke="#2030C0" stroke-width="1.1" fill="none"/><rect x="10" y="1" width="5" height="14" rx="1" fill="#F0B020" stroke="#222" stroke-width="0.8"/><rect x="10" y="5.5" width="5" height="5" fill="#E8E8F0" stroke="#222" stroke-width="0.5"/></svg>
<div class="a tx" style="left:118px;top:527px;color:#0A1A4A">Abwickeln1</div>
<div class="a" style="left:84px;top:531px;width:9px;height:9px;background:#F4F4F0;border:1px solid #C0C6CE;font:bold 9px/7px 'Liberation Sans';text-align:center;color:#000">+</div>
<svg class="a" style="left:98px;top:543px" width="16" height="16" viewBox="0 0 16 16"><rect x="1" y="1" width="5" height="14" rx="1" fill="#F0B020" stroke="#222" stroke-width="0.8"/><rect x="1" y="5.5" width="5" height="5" fill="#E8E8F0" stroke="#222" stroke-width="0.5"/><path d="M7 6 H10 M8.5 4L10.5 6L8.5 8" stroke="#2030C0" stroke-width="1.1" fill="none"/><path d="M12 1.5H14.5V14.5H8V12H12Z" fill="#E8E8F0" stroke="#222" stroke-width="0.9"/></svg>
<div class="a tx" style="left:118px;top:545px;color:#0A1A4A">Abbiegen1</div>
<div class="a" style="left:84px;top:549px;width:9px;height:9px;background:#F4F4F0;border:1px solid #C0C6CE;font:bold 9px/7px 'Liberation Sans';text-align:center;color:#000">+</div>
<svg class="a" style="left:98px;top:561px" width="16" height="16" viewBox="0 0 16 16"><path d="M4 1V8 M1.5 5.5L4 9L6.5 5.5" stroke="#1A2AA0" stroke-width="1.6" fill="none"/><rect x="10" y="1" width="3" height="11" fill="#E0E0E8" stroke="#555" stroke-width="0.7"/><rect x="0.5" y="12" width="15" height="3" fill="#F0F0F0" stroke="#1A2A6A" stroke-width="0.9"/><path d="M5 12V15M10 12V15" stroke="#2A3AA0" stroke-width="0.8"/></svg>
<div class="a" style="left:117px;top:562px;width:53px;height:15px;background:#316AC5"></div>
<div class="a tx" style="left:118px;top:563px;color:#fff">Entfalten1</div>
<svg class="a" style="left:98px;top:579px" width="16" height="16" viewBox="0 0 16 16"><path d="M1 4 L5 1 H15 V12 L11 15 H1Z" fill="#B5B5B5" stroke="#888" stroke-width="0.8"/><path d="M5 4 V15 M9 1 V12" stroke="#999" stroke-width="1.2"/></svg>
<div class="a tx" style="left:118px;top:581px;color:#8AA3BE">Abwicklung1</div>
<div class="a" style="left:84px;top:585px;width:9px;height:9px;background:#F4F4F0;border:1px solid #C0C6CE;font:bold 9px/7px 'Liberation Sans';text-align:center;color:#000">+</div>
<div class="a" style="left:75px;top:596px;width:188px;height:1px;background:#E8E000"></div>
<div class="a" style="left:75px;top:597px;width:188px;height:2px;background:#181A00"></div>
<div class="a" style="left:75px;top:1161px;width:188px;height:20px;background:linear-gradient(#E8E9EA,#F6F6F4 6px,#FBFBF9)"></div>
<svg class="a" style="left:77px;top:1162px" width="14" height="14" viewBox="0 0 16 16"><rect x="0.5" y="0.5" width="15" height="15" rx="2" fill="#C4D6F8" stroke="#B0C4EE" stroke-width="1"/><path d="M9.5 4 L5.5 8 L9.5 12" fill="none" stroke="#4A6090" stroke-width="2.2"/></svg>
<svg class="a" style="left:246px;top:1162px" width="14" height="14" viewBox="0 0 16 16"><rect x="0.5" y="0.5" width="15" height="15" rx="2" fill="#C4D6F8" stroke="#B0C4EE" stroke-width="1"/><path d="M6.5 4 L10.5 8 L6.5 12" fill="none" stroke="#4A6090" stroke-width="2.2"/></svg>
<div class="a" style="left:94px;top:1162px;width:143px;height:14px;background:linear-gradient(#C9D9F8,#B8CCF5);border:1px solid #A8BCE8;border-radius:2px"></div>
<div class="a" style="left:161px;top:1166px;width:7px;height:6px;border-left:1px solid #8FA7D8;border-right:1px solid #8FA7D8;"></div><div class="a" style="left:163px;top:1166px;width:3px;height:6px;border-left:1px solid #8FA7D8;border-right:1px solid #8FA7D8;"></div>
<div class="a" style="left:273px;top:165px;width:1302px;height:1017px;background:#000"></div>
<div class="a" style="left:274px;top:166px;width:1284px;height:1014px;background:linear-gradient(#59B8FB 0px,#6CC0FA 120px,#80C7F7 300px,#99CFF4 450px,#B0D7F1 620px,#C6DEEE 780px,#D5E0EA 880px,#E0E4E8 960px,#E7E8E9 1014px)"></div>
<svg class="a" style="left:274px;top:166px" width="1284" height="1014" viewBox="274 166 1284 1014"><polygon fill="#E8E8F0" points="660.4,166.0 311.0,411.0 516.3,541.6 566.6,555.1 821.0,716.0 845.0,749.0 1050.0,878.5 1557.5,525.4 1558.0,166.0"/>
<polygon fill="#E8E8F0" points="519.2,568.2 339.7,694.3 624.2,874.5 803.7,749.0 821.0,716.0 566.6,555.1"/>
<polygon fill="#D5D4DC" points="311.0,411.0 516.3,541.6 515.4,556.0 309.5,426.0"/>
<polygon fill="#D5D4DC" points="516.3,541.6 566.6,555.1 534.2,563.4 515.4,556.0"/>
<polygon fill="#D5D4DC" points="339.7,694.3 624.2,874.5 622.5,889.7 337.3,709.3"/>
<polygon fill="#EEEEFA" points="624.2,874.5 803.7,749.0 802.7,763.5 622.5,889.7"/>
<polygon fill="#F6F6FE" points="821.0,716.0 803.7,749.0 802.7,763.5 819.3,732.7"/>
<polygon fill="#D5D4DC" points="821.0,716.0 845.0,749.0 843.7,765.7 819.3,732.7"/>
<polygon fill="#D5D4DC" points="845.0,749.0 1050.0,878.5 1049.2,895.2 843.7,765.7"/>
<polygon fill="#EEEEFA" points="1050.0,878.5 1557.5,525.4 1557.5,540.4 1049.2,895.2"/>
<path d="M660.4 166.0L311.0 411.0 M311.0 411.0L309.5 426.0 M311.0 411.0L516.3 541.6 M309.5 426.0L515.4 556.0 M516.3 541.6L515.4 556.0 M516.3 541.6L1053.2 166.0 M566.6 555.1L1124.3 166.0 M516.3 541.6L566.6 555.1 M515.4 556.0L534.2 563.4 M519.2 568.2L566.6 555.1 M519.2 568.2L339.7 694.3 M339.7 694.3L337.3 709.3 M339.7 694.3L624.2 874.5 M337.3 709.3L622.5 889.7 M624.2 874.5L622.5 889.7 M624.2 874.5L803.7 749.0 M622.5 889.7L802.7 763.5 M803.7 749.0L802.7 763.5 M519.2 568.2L803.7 749.0 M566.6 555.1L821.0 716.0 M821.0 716.0L819.3 732.7 M821.0 716.0L803.7 749.0 M819.3 732.7L802.7 763.5 M821.0 716.0L845.0 749.0 M819.3 732.7L843.7 765.7 M845.0 749.0L843.7 765.7 M821.0 716.0L1558.0 200.1 M845.0 749.0L1558.0 249.9 M845.0 749.0L1050.0 878.5 M843.7 765.7L1049.2 895.2 M1050.0 878.5L1049.2 895.2 M1050.0 878.5L1557.5 525.4 M1049.2 895.2L1557.5 540.4" stroke="#000" stroke-width="0.95" fill="none" stroke-linejoin="round"/>
<defs><clipPath id="hc"><ellipse cx="874" cy="509.7" rx="54.7" ry="36.6"/></clipPath>
<linearGradient id="wall" x1="0" x2="1" y1="0" y2="0"><stop offset="0" stop-color="#F4F4FC"/><stop offset="0.45" stop-color="#E4E2EA"/><stop offset="1" stop-color="#CFCED6"/></linearGradient></defs>
<ellipse cx="874" cy="509.7" rx="54.7" ry="36.6" fill="url(#wall)"/>
<g clip-path="url(#hc)"><ellipse cx="872.7" cy="526" rx="54.7" ry="36.6" fill="#8DCAF6" stroke="#000" stroke-width="1.0"/></g>
<ellipse cx="874" cy="509.7" rx="54.7" ry="36.6" fill="none" stroke="#000" stroke-width="1.1"/>
<rect x="873" y="509" width="1" height="1" fill="#234"/><rect x="873" y="515" width="1" height="3" fill="#234"/></svg>
<svg class="a" style="left:280px;top:1085px" width="70" height="65" viewBox="0 0 70 65"><path d="M33.6 39.5 V26" stroke="#1E6A1E" stroke-width="4"/><path d="M29.5 25.5 Q30.5 21 34 18 Q37.5 21 38.5 25.5 L36 27.5 H31.5Z" fill="#2A8A2A"/><path d="M32 8 L35.5 12 L39 8 M35.5 12 V18" stroke="#2A7A2A" stroke-width="0.9" fill="none"/><path d="M33.6 39.5 L21 48" stroke="#1A2AA8" stroke-width="4"/><path d="M13 53.5 L19 47 L23.5 48.5 L22 53.5Z" fill="#3838E8"/><path d="M8.5 51 H13 L9 58.5 H13.5" stroke="#2020C0" stroke-width="1" fill="none"/><path d="M33.6 39.5 L46 48" stroke="#B01E1E" stroke-width="4"/><path d="M53.5 53.5 L46.5 46.5 L44 50.5 L46.5 53.5Z" fill="#E84848"/><path d="M55 51 L59.5 58.5 M59.5 51 L55 58.5" stroke="#D03030" stroke-width="0.9"/></svg>
<div class="a" style="left:1558px;top:166px;width:17px;height:1014px;background:linear-gradient(90deg,#EDEFEE 0px,#F8F8F6 3px,#FEFEFD 6px,#FEFEFD 16px,#E4E2D6 17px)"></div>
<div class="a" style="left:1558px;top:166px;width:17px;height:6px;background:#ECE9D8;border-bottom:1px solid #000"></div>
<svg class="a" style="left:1560px;top:174px" width="14" height="15" viewBox="0 0 16 16"><rect x="0.5" y="0.5" width="15" height="15" rx="2" fill="#C4D6F8" stroke="#B0C4EE" stroke-width="1"/><path d="M4 9.5 L8 5.5 L12 9.5" fill="none" stroke="#4A6090" stroke-width="2.2"/></svg>
<div class="a" style="left:1560px;top:1074px;width:14px;height:72px;background:linear-gradient(90deg,#C9D8F8,#B9CDF6);border:1px solid #A8BCE8;border-radius:2px"></div>
<div class="a" style="left:1564px;top:1108px;width:6px;height:7px;border-top:1px solid #8FA7D8;border-bottom:1px solid #8FA7D8"></div><div class="a" style="left:1564px;top:1110px;width:6px;height:3px;border-top:1px solid #8FA7D8;border-bottom:1px solid #8FA7D8"></div>
<svg class="a" style="left:1560px;top:1147px" width="14" height="15" viewBox="0 0 16 16"><rect x="0.5" y="0.5" width="15" height="15" rx="2" fill="#C4D6F8" stroke="#B0C4EE" stroke-width="1"/><path d="M4 6.5 L8 10.5 L12 6.5" fill="none" stroke="#4A6090" stroke-width="2.2"/></svg>
<div class="a" style="left:274px;top:1163px;width:1284px;height:17px;background:linear-gradient(#ECEDEC 0px,#F6F6F4 4px,#FDFDFB 8px,#FEFEFC 17px)"></div>
<div class="a" style="left:274px;top:1163px;width:7px;height:18px;background:#F4F2EA;border-right:1px solid #000;border-bottom:1px solid #000"></div>
<svg class="a" style="left:282px;top:1166px" width="14" height="14" viewBox="0 0 16 16"><rect x="0.5" y="0.5" width="15" height="15" rx="2" fill="#C4D6F8" stroke="#B0C4EE" stroke-width="1"/><path d="M9.5 4 L5.5 8 L9.5 12" fill="none" stroke="#4A6090" stroke-width="2.2"/></svg>
<div class="a" style="left:311px;top:1166px;width:86px;height:14px;background:linear-gradient(#C9D9F8,#B8CCF5);border:1px solid #A8BCE8;border-radius:2px"></div>
<div class="a" style="left:351px;top:1170px;width:7px;height:6px;border-left:1px solid #8FA7D8;border-right:1px solid #8FA7D8;"></div><div class="a" style="left:353px;top:1170px;width:3px;height:6px;border-left:1px solid #8FA7D8;border-right:1px solid #8FA7D8;"></div>
<svg class="a" style="left:1542px;top:1166px" width="14" height="14" viewBox="0 0 16 16"><rect x="0.5" y="0.5" width="15" height="15" rx="2" fill="#C4D6F8" stroke="#B0C4EE" stroke-width="1"/><path d="M6.5 4 L10.5 8 L6.5 12" fill="none" stroke="#4A6090" stroke-width="2.2"/></svg>
<div class="a" style="left:1558px;top:1163px;width:17px;height:17px;background:#ECE9D8"></div>
<div class="a" style="left:273px;top:1180px;width:1302px;height:2px;background:#ECE9D8"></div>
<div class="a" style="left:1575px;top:165px;width:25px;height:1017px;background:#ECE9D8;border-left:1px solid #fff"></div>
<div class="a" style="left:1577px;top:190px;width:20px;height:26px;background:#E7E8E6;border:1px solid #C8CCD4;border-left:none;border-radius:0 3px 3px 0"></div>
<svg class="a" style="left:1578px;top:195px" width="16" height="16" viewBox="0 0 16 16"><path d="M1 8 L8 2 L15 8" fill="none" stroke="#222" stroke-width="1.3"/><path d="M3 7 V15 H13 V7 L8 3Z" fill="#F8E090" stroke="#333" stroke-width="0.9"/><rect x="6.5" y="10" width="3" height="5" fill="#C89020"/><rect x="12" y="1" width="2" height="5" fill="#C02020"/></svg>
<div class="a" style="left:1577px;top:217px;width:20px;height:26px;background:#E7E8E6;border:1px solid #C8CCD4;border-left:none;border-radius:0 3px 3px 0"></div>
<svg class="a" style="left:1578px;top:222px" width="16" height="16" viewBox="0 0 16 16"><rect x="1" y="8" width="5" height="7" fill="#3AA030" stroke="#111" stroke-width="0.8"/><rect x="6" y="5" width="4" height="10" fill="#F0D030" stroke="#111" stroke-width="0.8"/><rect x="10" y="2" width="5" height="13" fill="#4A7AD0" stroke="#111" stroke-width="0.8"/></svg>
<div class="a" style="left:1577px;top:245px;width:20px;height:26px;background:#FCFCFB;border:1px solid #C8CCD4;border-left:none;border-radius:0 3px 3px 0;border-right:2px solid #F3B33D"></div>
<svg class="a" style="left:1578px;top:250px" width="16" height="16" viewBox="0 0 16 16"><path d="M1 4 H6 L7 5.5 H15 V14 H1Z" fill="#E8C050" stroke="#806020" stroke-width="0.8"/><circle cx="8" cy="9" r="3.5" fill="#D8E8F4" stroke="#555" stroke-width="0.7"/></svg>
<svg class="a" style="left:1578px;top:275px" width="16" height="16" viewBox="0 0 16 16"><circle cx="8" cy="8" r="7" fill="#F4F6FA" stroke="#A8B8D0" stroke-width="1"/><path d="M8 4.5 L4.5 8 L8 11.5 M11.5 4.5 L8 8 L11.5 11.5" fill="none" stroke="#1A3A8A" stroke-width="1.5"/></svg>
<svg class="a" style="left:1578px;top:1090px" width="16" height="16" viewBox="0 0 16 16"><circle cx="8" cy="8" r="7" fill="#F4F6FA" stroke="#A8B8D0" stroke-width="1"/><path d="M8 4.5 L4.5 8 L8 11.5 M11.5 4.5 L8 8 L11.5 11.5" fill="none" stroke="#1A3A8A" stroke-width="1.5"/></svg>
<div class="a" style="left:1583px;top:300px;width:2px;height:784px;border-left:1px solid #A8A498;border-right:1px solid #FFFDF4"></div>
<div class="a" style="left:1587px;top:300px;width:2px;height:784px;border-left:1px solid #A8A498;border-right:1px solid #FFFDF4"></div>
<div class="a" style="left:0;top:1182px;width:1600px;height:16px;background:#ECE9D8;border-top:1px solid #D8D3C0"></div>
<div class="a sep" style="left:1395px;top:1185px;height:12px"></div>
<div class="a sep" style="left:1403px;top:1185px;height:12px"></div>
<div class="a sep" style="left:1411px;top:1185px;height:12px"></div>
<div class="a sep" style="left:1492px;top:1185px;height:12px"></div>
<div class="a sep" style="left:1500px;top:1185px;height:12px"></div>
<div class="a sep" style="left:1508px;top:1185px;height:12px"></div>
<div class="a tx" style="left:1415px;top:1186px;">Bearbeiten Teil</div>
<svg class="a" style="left:1519px;top:1184px" width="14" height="14" viewBox="0 0 16 16"><rect x="1" y="2" width="13" height="14" fill="#F0F4C8" stroke="#9AAA80" stroke-width="0.8"/><rect x="1" y="0.5" width="13" height="2" fill="#5A8AAA"/><text x="7.5" y="14.5" text-anchor="middle" font-family="Liberation Sans" font-weight="bold" font-size="13" fill="#1A9A1A" stroke="#1A9A1A" stroke-width="0.6">?</text></svg>
<div class="a" style="left:0;top:1198px;width:1600px;height:2px;background:#3A6FD0"></div>
<div class="a" style="left:1595px;top:1187px;width:2px;height:2px;background:#C2BEAC"></div>
<div class="a" style="left:1591px;top:1191px;width:2px;height:2px;background:#C2BEAC"></div>
<div class="a" style="left:1595px;top:1191px;width:2px;height:2px;background:#C2BEAC"></div>
<div class="a" style="left:1587px;top:1195px;width:2px;height:2px;background:#C2BEAC"></div>
<div class="a" style="left:1591px;top:1195px;width:2px;height:2px;background:#C2BEAC"></div>
<div class="a" style="left:1595px;top:1195px;width:2px;height:2px;background:#C2BEAC"></div>
</body></html>
